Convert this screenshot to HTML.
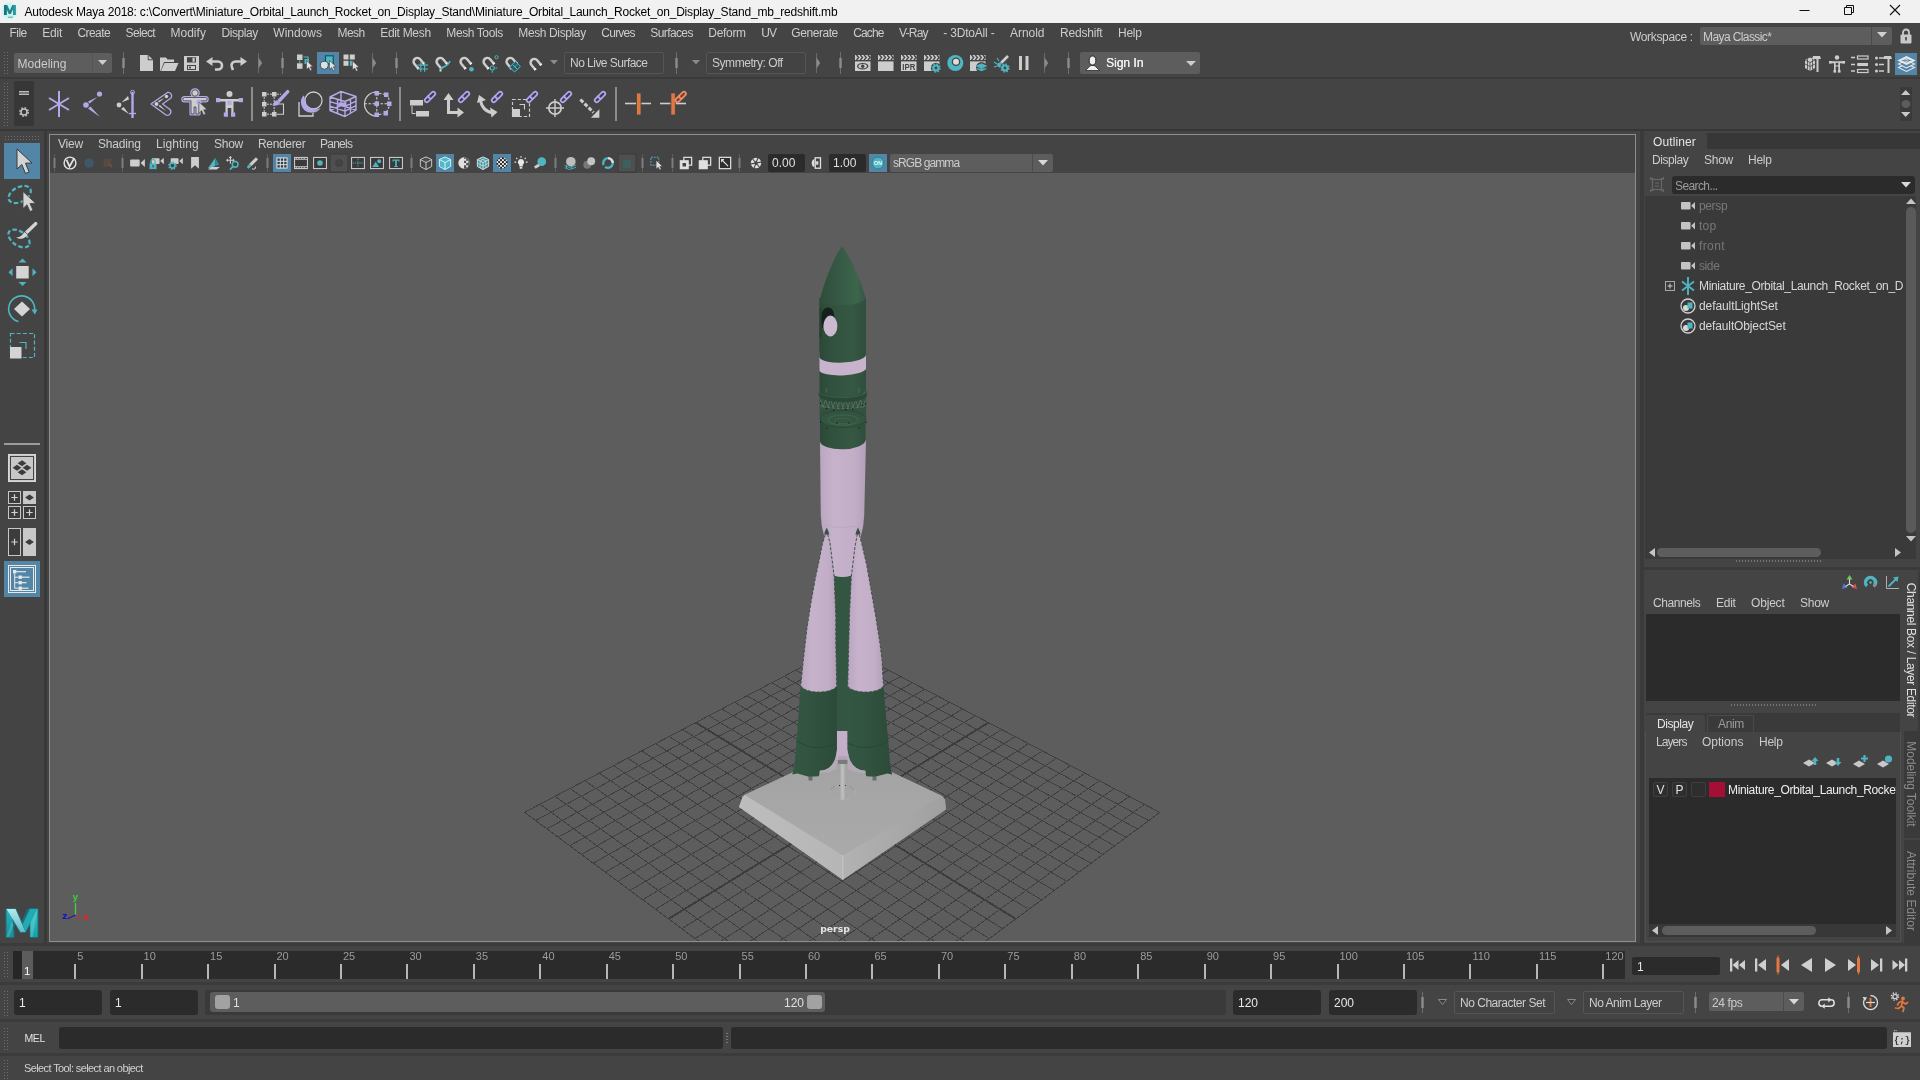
<!DOCTYPE html>
<html><head><meta charset="utf-8"><title>Autodesk Maya 2018</title>
<style>
*{box-sizing:border-box;margin:0;padding:0}
html,body{width:1920px;height:1080px;overflow:hidden;background:#444444;}
body{position:relative;font-family:"Liberation Sans","DejaVu Sans",sans-serif;font-size:12px;color:#cccccc;}
.a{position:absolute;}
.t{position:absolute;white-space:nowrap;line-height:14px;height:14px;}
.fld{position:absolute;background:#2b2b2b;border-radius:2px;}
svg{position:absolute;overflow:visible;}
</style></head><body><div class="a" style="left:0;top:0;width:1920px;height:1080px;will-change:transform">
<div class="a" style="left:0;top:0;width:1920px;height:23px;background:#f1f1f1"></div>
<svg style="left:2px;top:2px" width="16" height="18" viewBox="0 0 16 18">
<defs><radialGradient id="tig" cx=".5" cy=".5" r=".6"><stop offset="0" stop-color="#bdf0f0"/><stop offset=".75" stop-color="#cdf2f2"/><stop offset="1" stop-color="#eef4f4"/></radialGradient></defs>
<rect x="0" y="0.500" width="15" height="16.500" fill="url(#tig)"/>
<path d="M2 3 H5.200 L7.800 8.500 L10.400 3 H13.600 V13 H11 V7.300 L8.800 12 H6.800 L4.600 7.300 V13 H2Z" fill="#1f858b"/>
<path d="M2 3 H4.600 V13 H2Z" fill="#17747b"/><path d="M11 3 H13.600 V13 H11Z" fill="#2a979c"/>
<path d="M6 15.200 h5" stroke="#5aa7ab" stroke-width="1"/>
</svg>
<div class="t" style="left:24.400px;top:5px;font-size:12px;color:#000;line-height:15px;height:15px;letter-spacing:-0.197px">Autodesk Maya 2018: c:\Convert\Miniature_Orbital_Launch_Rocket_on_Display_Stand\Miniature_Orbital_Launch_Rocket_on_Display_Stand_mb_redshift.mb</div>
<svg style="left:1790px;top:-1px" width="130" height="23" viewBox="0 0 130 23">
<path d="M9.5 11.5 H19.5" stroke="#111" stroke-width="1" fill="none"/>
<path d="M54.5 8.5 h7 v7 h-7 z M56.5 8.5 v-2 h7 v7 h-2" stroke="#111" stroke-width="1" fill="none"/>
<path d="M100 6 L110 16 M110 6 L100 16" stroke="#111" stroke-width="1.1" fill="none"/>
</svg>
<div class="t mm" style="left:9.4px;top:26px;letter-spacing:-0.486px">File</div><div class="t mm" style="left:42.3px;top:26px;letter-spacing:-0.247px">Edit</div><div class="t mm" style="left:77.5px;top:26px;letter-spacing:-0.572px">Create</div><div class="t mm" style="left:125.6px;top:26px;letter-spacing:-0.677px">Select</div><div class="t mm" style="left:170.4px;top:26px;letter-spacing:0.043px">Modify</div><div class="t mm" style="left:221.5px;top:26px;letter-spacing:-0.437px">Display</div><div class="t mm" style="left:273.3px;top:26px;letter-spacing:0.002px">Windows</div><div class="t mm" style="left:337.5px;top:26px;letter-spacing:-0.536px">Mesh</div><div class="t mm" style="left:380.2px;top:26px;letter-spacing:-0.307px">Edit Mesh</div><div class="t mm" style="left:446.3px;top:26px;letter-spacing:-0.398px">Mesh Tools</div><div class="t mm" style="left:518.3px;top:26px;letter-spacing:-0.378px">Mesh Display</div><div class="t mm" style="left:601.3px;top:26px;letter-spacing:-0.753px">Curves</div><div class="t mm" style="left:650.3px;top:26px;letter-spacing:-0.607px">Surfaces</div><div class="t mm" style="left:708.3px;top:26px;letter-spacing:-0.307px">Deform</div><div class="t mm" style="left:761.3px;top:26px;letter-spacing:-1.086px">UV</div><div class="t mm" style="left:791.3px;top:26px;letter-spacing:-0.443px">Generate</div><div class="t mm" style="left:853.3px;top:26px;letter-spacing:-0.897px">Cache</div><div class="t mm" style="left:899.0px;top:26px;letter-spacing:-0.778px">V-Ray</div><div class="t mm" style="left:943.3px;top:26px;letter-spacing:-0.195px">- 3DtoAll -</div><div class="t mm" style="left:1010.0px;top:26px;letter-spacing:-0.031px">Arnold</div><div class="t mm" style="left:1060.0px;top:26px;letter-spacing:-0.191px">Redshift</div><div class="t mm" style="left:1118.0px;top:26px;letter-spacing:-0.247px">Help</div>
<div class="t" style="left:1630px;top:30px;letter-spacing:-0.343px">Workspace :</div><div class="a" style="left:1700px;top:27px;width:192px;height:18px;background:#5d5d5d;border-radius:2px"></div><div class="a" style="left:1871px;top:27px;width:1px;height:18px;background:#4a4a4a"></div><div class="t" style="left:1703px;top:30px;letter-spacing:-0.595px">Maya Classic*</div><svg style="left:1877px;top:32px" width="10" height="6"><path d="M0 0 H10 L5 5.5Z" fill="#d0d0d0"/></svg><svg style="left:1900px;top:28px" width="12" height="16" viewBox="0 0 12 16">
<path d="M3 7 V4.5 a3 3 0 0 1 6 0 V7" stroke="#c8c8c8" stroke-width="1.8" fill="none"/>
<rect x="0.5" y="6.5" width="11" height="9" rx="1" fill="#c8c8c8"/><rect x="5.2" y="9" width="1.6" height="3.5" fill="#444"/>
</svg>
<div class="a" style="left:3px;top:51px;width:5px;height:25px;background-image:radial-gradient(circle,#6e6e6e 0.6px,transparent 0.9px);background-size:3px 3px"></div>
<div class="a" style="left:14px;top:53px;width:98px;height:20px;background:#5d5d5d;border-radius:2px"></div><div class="a" style="left:92px;top:53px;width:1px;height:20px;background:#555"></div><div class="t" style="left:17.500px;top:57px;letter-spacing:0.037px">Modeling</div><svg style="left:98px;top:60px" width="9" height="5" viewBox="0 0 9 5"><path d="M0 0 H9 L4.5 5Z" fill="#cdcdcd"/></svg>
<svg style="left:121px;top:52px" width="5" height="22" viewBox="0 0 5 22"><path d="M2.500 0 V22" stroke="#6e6e6e" stroke-width="1"/><rect x="1.300" y="6" width="2.400" height="10" fill="#8c8c8c"/></svg>
<svg style="left:139.5px;top:55px" width="13" height="16" viewBox="0 0 13 16"><path d="M0 0 H8 L13 5 V16 H0Z" fill="#cdcdcd"/><path d="M8 0 V5 H13" fill="#444" stroke="#444" stroke-width=".5"/><path d="M8.7 0.7 L12.3 4.3 H8.7Z" fill="#cdcdcd"/></svg>
<svg style="left:160px;top:56px" width="19" height="15" viewBox="0 0 19 15"><path d="M0 15 V1.5 H6 L7.5 3.5 H14 V6 H4 L1 14Z" fill="#cdcdcd"/><path d="M4.5 7 H18.5 L15 15 H1Z" fill="#cdcdcd"/></svg>
<svg style="left:184px;top:56px" width="15" height="15" viewBox="0 0 15 15"><path d="M0 0 H15 V15 H0Z" fill="#cdcdcd"/><rect x="3" y="1.2" width="9" height="5.3" fill="#444"/><rect x="8.5" y="1.8" width="2.2" height="4" fill="#cdcdcd"/><rect x="3" y="9" width="9" height="5" fill="#444"/><rect x="4" y="10" width="7" height="3" fill="#cdcdcd"/><rect x="5" y="10.7" width="2" height="1.6" fill="#444"/></svg>
<svg style="left:206px;top:57px" width="18" height="14" viewBox="0 0 18 14"><path d="M5 4.5 H12 A4 4 0 0 1 12 12.5 H9" stroke="#cdcdcd" stroke-width="2.6" fill="none"/><path d="M0 4.5 L6.5 0 V9Z" fill="#cdcdcd"/></svg>
<svg style="left:229px;top:57px" width="18" height="14" viewBox="0 0 18 14"><path d="M13 4.5 H6.5 A4 4 0 0 0 3 10.5 L4 13" stroke="#cdcdcd" stroke-width="2.6" fill="none"/><path d="M18 4.5 L11.5 0 V9Z" fill="#cdcdcd"/></svg>
<svg style="left:257px;top:53px" width="6" height="20" viewBox="0 0 6 20"><path d="M1.500 0 V20" stroke="#6a6a6a" stroke-width="1"/><path d="M1.500 4.500 L5.200 10 L1.500 15.500Z" fill="#8c8c8c"/></svg>
<svg style="left:280px;top:52px" width="5" height="22" viewBox="0 0 5 22"><path d="M2.500 0 V22" stroke="#6e6e6e" stroke-width="1"/><rect x="1.300" y="6" width="2.400" height="10" fill="#8c8c8c"/></svg>
<svg style="left:296px;top:54px" width="18" height="18" viewBox="0 0 18 18"><rect x="1" y="0.500" width="5.500" height="5.500" fill="#cdcdcd"/><rect x="1" y="9.300" width="5.500" height="5.500" fill="#cdcdcd"/><path d="M3.700 6.500 v2.500 M7.500 3 H12 V6" stroke="#4fb5c0" stroke-width="1.200" fill="none"/><rect x="8.500" y="5" width="4.500" height="5" fill="#4fb5c0"/><g transform="translate(10.5,6.5)"><path d="M0 0 L0 9 L2.2 7 L3.8 10.3 L5.4 9.6 L3.8 6.3 L6.6 6.2Z" fill="#e0e0e0" stroke="#444" stroke-width=".6"/></g></svg>
<div class="a" style="left:317px;top:52px;width:22px;height:22px;background:#5285a6"></div><svg style="left:319px;top:54px" width="18" height="18" viewBox="0 0 18 18"><rect x="6.500" y="1.800" width="7.800" height="8" fill="#4fb5c0" stroke="#0e4f5c" stroke-width="1.100"/><circle cx="5.300" cy="11.300" r="4" fill="#e0e0e0" stroke="#1f4d68" stroke-width=".9"/><g transform="translate(10.5,6.5)"><path d="M0 0 L0 9 L2.2 7 L3.8 10.3 L5.4 9.6 L3.8 6.3 L6.6 6.2Z" fill="#e0e0e0" stroke="#444" stroke-width=".6"/></g></svg>
<svg style="left:343px;top:54px" width="18" height="18" viewBox="0 0 18 18"><rect x="0.500" y="0.500" width="5" height="5" fill="#cdcdcd"/><rect x="6.800" y="0.500" width="5" height="5" fill="#cdcdcd"/><rect x="0.500" y="6.800" width="5" height="5" fill="#cdcdcd"/><rect x="6.800" y="6.800" width="3.500" height="5" fill="#4fb5c0"/><g transform="translate(9.5,7)"><path d="M0 0 L0 9 L2.2 7 L3.8 10.3 L5.4 9.6 L3.8 6.3 L6.6 6.2Z" fill="#e0e0e0" stroke="#444" stroke-width=".6"/></g></svg>
<svg style="left:371px;top:53px" width="6" height="20" viewBox="0 0 6 20"><path d="M1.500 0 V20" stroke="#6a6a6a" stroke-width="1"/><path d="M1.500 4.500 L5.200 10 L1.500 15.500Z" fill="#8c8c8c"/></svg>
<svg style="left:394px;top:52px" width="5" height="22" viewBox="0 0 5 22"><path d="M2.500 0 V22" stroke="#6e6e6e" stroke-width="1"/><rect x="1.300" y="6" width="2.400" height="10" fill="#8c8c8c"/></svg>
<svg style="left:410px;top:54px" width="17" height="18" viewBox="0 0 17 18"><g transform="translate(7.3,7.6) rotate(-40)"><path d="M-3.700 6.200 V0 A3.700 3.700 0 0 1 3.700 0 V6.200" stroke="#cdcdcd" stroke-width="2.500" fill="none"/><rect x="-4.950" y="5" width="2.500" height="1.600" fill="#f4f4f4"/><rect x="2.450" y="5" width="2.500" height="1.600" fill="#f4f4f4"/></g><path d="M10.800 8.500 V17.800 M14.600 8.500 V17.800 M7.500 11.200 H18 M7.500 15 H18" stroke="#4fb5c0" stroke-width="1.200"/></svg>
<svg style="left:433px;top:54px" width="17" height="18" viewBox="0 0 17 18"><g transform="translate(7.3,7.6) rotate(-40)"><path d="M-3.700 6.200 V0 A3.700 3.700 0 0 1 3.700 0 V6.200" stroke="#cdcdcd" stroke-width="2.500" fill="none"/><rect x="-4.950" y="5" width="2.500" height="1.600" fill="#f4f4f4"/><rect x="2.450" y="5" width="2.500" height="1.600" fill="#f4f4f4"/></g><path d="M7.500 16 C8 11.500 14 14.500 17 7" stroke="#4fb5c0" stroke-width="1.800" fill="none"/><rect x="6.500" y="15.500" width="2" height="2" fill="#ddd"/></svg>
<svg style="left:457px;top:54px" width="17" height="18" viewBox="0 0 17 18"><g transform="translate(7.3,7.6) rotate(-40)"><path d="M-3.700 6.200 V0 A3.700 3.700 0 0 1 3.700 0 V6.200" stroke="#cdcdcd" stroke-width="2.500" fill="none"/><rect x="-4.950" y="5" width="2.500" height="1.600" fill="#f4f4f4"/><rect x="2.450" y="5" width="2.500" height="1.600" fill="#f4f4f4"/></g><circle cx="14.500" cy="15.200" r="2.300" fill="#4fb5c0"/></svg>
<svg style="left:480px;top:54px" width="17" height="18" viewBox="0 0 17 18"><g transform="translate(7.3,7.6) rotate(-40)"><path d="M-3.700 6.200 V0 A3.700 3.700 0 0 1 3.700 0 V6.200" stroke="#cdcdcd" stroke-width="2.500" fill="none"/><rect x="-4.950" y="5" width="2.500" height="1.600" fill="#f4f4f4"/><rect x="2.450" y="5" width="2.500" height="1.600" fill="#f4f4f4"/></g><circle cx="12.300" cy="14" r="2" fill="none" stroke="#4fb5c0" stroke-width="1.100"/><circle cx="16.500" cy="3.200" r="1.600" fill="none" stroke="#4fb5c0" stroke-width="1"/><path d="M12.300 16.800 v2 M15.300 14 h2" stroke="#4fb5c0" stroke-width="1"/></svg>
<svg style="left:503px;top:54px" width="17" height="18" viewBox="0 0 17 18"><g transform="translate(7.3,7.6) rotate(-40)"><path d="M-3.700 6.200 V0 A3.700 3.700 0 0 1 3.700 0 V6.200" stroke="#cdcdcd" stroke-width="2.500" fill="none"/><rect x="-4.950" y="5" width="2.500" height="1.600" fill="#f4f4f4"/><rect x="2.450" y="5" width="2.500" height="1.600" fill="#f4f4f4"/></g><path d="M6.500 13 L12.500 7.500 L17.500 12.500 L11.500 18Z" fill="#2d5a62" stroke="#4fb5c0" stroke-width="1"/><path d="M9.500 10.500 L14.500 15.500 M11 13.500 l3 -3" stroke="#4fb5c0" stroke-width="1" fill="none"/></svg>
<svg style="left:527px;top:55px" width="17" height="18" viewBox="0 0 17 18"><g transform="translate(7.3,7.6) rotate(-40)"><path d="M-3.700 6.200 V0 A3.700 3.700 0 0 1 3.700 0 V6.200" stroke="#cdcdcd" stroke-width="2.500" fill="none"/><rect x="-4.950" y="5" width="2.500" height="1.600" fill="#f4f4f4"/><rect x="2.450" y="5" width="2.500" height="1.600" fill="#f4f4f4"/></g></svg>
<svg style="left:550px;top:60px" width="8" height="5" viewBox="0 0 8 5"><path d="M0 0 H8 L4 4.5Z" fill="#8a8a8a"/></svg>
<div class="a" style="left:564px;top:52px;width:100px;height:22px;border:1px solid #555;border-radius:2px;background:#434343"></div><div class="t" style="left:570px;top:56px;letter-spacing:-0.526px">No Live Surface</div><svg style="left:674px;top:52px" width="5" height="22" viewBox="0 0 5 22"><path d="M2.500 0 V22" stroke="#6e6e6e" stroke-width="1"/><rect x="1.300" y="6" width="2.400" height="10" fill="#8c8c8c"/></svg>
<svg style="left:692px;top:60px" width="8" height="5" viewBox="0 0 8 5"><path d="M0 0 H8 L4 4.5Z" fill="#8a8a8a"/></svg>
<div class="a" style="left:706px;top:52px;width:100px;height:22px;border:1px solid #555;border-radius:2px;background:#434343"></div><div class="t" style="left:712px;top:56px;letter-spacing:-0.443px">Symmetry: Off</div><svg style="left:815px;top:53px" width="6" height="20" viewBox="0 0 6 20"><path d="M1.500 0 V20" stroke="#6a6a6a" stroke-width="1"/><path d="M1.500 4.500 L5.200 10 L1.500 15.500Z" fill="#8c8c8c"/></svg>
<svg style="left:838px;top:52px" width="5" height="22" viewBox="0 0 5 22"><path d="M2.500 0 V22" stroke="#6e6e6e" stroke-width="1"/><rect x="1.300" y="6" width="2.400" height="10" fill="#8c8c8c"/></svg>
<svg style="left:855px;top:55px" width="16" height="16" viewBox="0 0 16 16"><rect x="0" y="0" width="15.500" height="5" fill="#cdcdcd"/><path d="M1.500 0 l2.200 2.500 l-2.200 2.500 M5.300 0 l2.200 2.500 l-2.200 2.500 M9.100 0 l2.200 2.500 l-2.200 2.500 M12.900 0 l2.200 2.500 l-2.200 2.500" stroke="#444" stroke-width="1.300" fill="none"/><rect x="0" y="2.100" width="15.500" height=".8" fill="#444" opacity=".0"/><rect x="0" y="6.400" width="15.500" height="9.600" fill="#cdcdcd"/><ellipse cx="7.700" cy="11.200" rx="5.600" ry="3.300" fill="#444"/><ellipse cx="7.700" cy="11.200" rx="4.200" ry="2.100" fill="#cdcdcd"/><circle cx="7.700" cy="11.200" r="1.700" fill="#444"/></svg>
<svg style="left:878px;top:55px" width="16" height="16" viewBox="0 0 16 16"><rect x="0" y="0" width="15.500" height="5" fill="#cdcdcd"/><path d="M1.500 0 l2.200 2.500 l-2.200 2.500 M5.300 0 l2.200 2.500 l-2.200 2.500 M9.100 0 l2.200 2.500 l-2.200 2.500 M12.900 0 l2.200 2.500 l-2.200 2.500" stroke="#444" stroke-width="1.300" fill="none"/><rect x="0" y="2.100" width="15.500" height=".8" fill="#444" opacity=".0"/><rect x="0" y="6.400" width="15.500" height="9.600" fill="#cdcdcd"/></svg>
<svg style="left:901px;top:55px" width="16" height="16" viewBox="0 0 16 16"><rect x="0" y="0" width="15.500" height="5" fill="#cdcdcd"/><path d="M1.500 0 l2.200 2.500 l-2.200 2.500 M5.300 0 l2.200 2.500 l-2.200 2.500 M9.100 0 l2.200 2.500 l-2.200 2.500 M12.900 0 l2.200 2.500 l-2.200 2.500" stroke="#444" stroke-width="1.300" fill="none"/><rect x="0" y="2.100" width="15.500" height=".8" fill="#444" opacity=".0"/><rect x="0" y="6.400" width="15.500" height="9.600" fill="#cdcdcd"/><text x="7.800" y="14.600" font-size="8.500" font-weight="bold" text-anchor="middle" fill="#444" font-family="Liberation Sans,sans-serif" textLength="13" lengthAdjust="spacingAndGlyphs">IPR</text></svg>
<svg style="left:924px;top:55px" width="17" height="17" viewBox="0 0 17 17"><rect x="0" y="0" width="15.500" height="5" fill="#cdcdcd"/><path d="M1.500 0 l2.200 2.500 l-2.200 2.500 M5.300 0 l2.200 2.500 l-2.200 2.500 M9.100 0 l2.200 2.500 l-2.200 2.500 M12.900 0 l2.200 2.500 l-2.200 2.500" stroke="#444" stroke-width="1.300" fill="none"/><rect x="0" y="2.100" width="15.500" height=".8" fill="#444" opacity=".0"/><rect x="0" y="6.400" width="15.500" height="9.600" fill="#cdcdcd"/><circle cx="12" cy="13" r="5.2" fill="#444"/><circle cx="12" cy="13" r="3.6" fill="#4fb5c0"/><circle cx="12" cy="13" r="3.9" fill="none" stroke="#4fb5c0" stroke-width="1.6" stroke-dasharray="1.5 1.56"/><circle cx="12" cy="13" r="1.4" fill="#444"/></svg>
<svg style="left:947px;top:55px" width="17" height="17" viewBox="0 0 17 17"><circle cx="8.3" cy="8" r="8" fill="#4fb5c0"/><circle cx="9" cy="6.8" r="4.3" fill="#444"/><circle cx="9" cy="6.8" r="3" fill="#ddd"/></svg>
<svg style="left:970px;top:55px" width="17" height="17" viewBox="0 0 17 17"><rect x="0" y="0" width="15.500" height="5" fill="#cdcdcd"/><path d="M1.500 0 l2.200 2.500 l-2.200 2.500 M5.300 0 l2.200 2.500 l-2.200 2.500 M9.100 0 l2.200 2.500 l-2.200 2.500 M12.900 0 l2.200 2.500 l-2.200 2.500" stroke="#444" stroke-width="1.300" fill="none"/><rect x="0" y="2.100" width="15.500" height=".8" fill="#444" opacity=".0"/><rect x="0" y="6.400" width="15.500" height="9.600" fill="#cdcdcd"/><circle cx="11.5" cy="12.5" r="5.5" fill="#444"/><path d="M6.5 11 L11.5 8.8 L16.5 11 L11.5 13.2Z M6.5 13.5 L11.5 15.7 L16.5 13.5" fill="#4fb5c0" stroke="#4fb5c0" stroke-width="1"/></svg>
<svg style="left:993px;top:55px" width="17" height="17" viewBox="0 0 17 17"><path d="M8 8 L15 1" stroke="#cdcdcd" stroke-width="2.6"/><path d="M1 7 l3 2 M4 3 l2 3 M1 12 l3 -1" stroke="#4fb5c0" stroke-width="1.1"/><circle cx="6.5" cy="10" r="2.4" fill="#4fb5c0"/><circle cx="12" cy="13" r="5" fill="#444"/><circle cx="12" cy="13" r="3.6" fill="#4fb5c0"/><circle cx="12" cy="13" r="3.9" fill="none" stroke="#4fb5c0" stroke-width="1.6" stroke-dasharray="1.5 1.56"/><circle cx="12" cy="13" r="1.4" fill="#444"/></svg>
<svg style="left:1019px;top:56px" width="10" height="14" viewBox="0 0 10 14"><rect x="0" y="0" width="3" height="14" fill="#cdcdcd"/><rect x="6.5" y="0" width="3" height="14" fill="#cdcdcd"/></svg>
<svg style="left:1043px;top:53px" width="6" height="20" viewBox="0 0 6 20"><path d="M1.500 0 V20" stroke="#6a6a6a" stroke-width="1"/><path d="M1.500 4.500 L5.200 10 L1.500 15.500Z" fill="#8c8c8c"/></svg>
<svg style="left:1066px;top:52px" width="5" height="22" viewBox="0 0 5 22"><path d="M2.500 0 V22" stroke="#6e6e6e" stroke-width="1"/><rect x="1.300" y="6" width="2.400" height="10" fill="#8c8c8c"/></svg>
<div class="a" style="left:1080px;top:52px;width:120px;height:22px;background:#5d5d5d;border-radius:2px"></div><svg style="left:1085px;top:55px" width="15" height="16" viewBox="0 0 15 16"><path d="M0.500 15.500 L4.500 11.500 L6 10.500 H9 L10.500 11.500 L14.500 15.500Z" fill="#f0f0f0" stroke="#1e1e1e" stroke-width=".7"/><ellipse cx="7.500" cy="5.500" rx="3.300" ry="4.500" fill="#f0f0f0" stroke="#1e1e1e" stroke-width=".9"/></svg>
<div class="t" style="left:1106px;top:56px;font-size:12px;color:#eee;text-shadow:0.3px 0 0 #eee;letter-spacing:-0.008px">Sign In</div><svg style="left:1186px;top:61px" width="10" height="5" viewBox="0 0 10 5"><path d="M0 0 H10 L5 5Z" fill="#cdcdcd"/></svg>
<svg style="left:1804px;top:55px" width="18" height="18" viewBox="0 0 18 18"><path d="M1 5 L6 2.5 L11 5 V13 L6 16 L1 13Z" fill="#cdcdcd"/><path d="M1 5 L6 7.5 L11 5 M6 7.5 V16 M3.5 3.8 V14.5 M8.5 3.8 V14.5 M1 9 L6 11.5 L11 9" stroke="#444" stroke-width=".8" fill="none"/><path d="M9 1 H16 L17 4 H14.5 V17 H12.5 V4 H8Z" fill="#cdcdcd"/></svg>
<svg style="left:1829px;top:55px" width="16" height="18" viewBox="0 0 16 18"><circle cx="8" cy="2.500" r="2.200" fill="#cdcdcd"/><path d="M2 6.300 H14 V8.300 H11 V15 H9.300 V11.500 H6.700 V15 H5 V8.300 H2Z" fill="#cdcdcd"/><rect x="0" y="6" width="2.600" height="2.600" fill="#cdcdcd"/><rect x="13.400" y="6" width="2.600" height="2.600" fill="#cdcdcd"/><rect x="4.500" y="15" width="2.600" height="2.600" fill="#cdcdcd"/><rect x="8.900" y="15" width="2.600" height="2.600" fill="#cdcdcd"/><rect x="6.700" y="7.800" width="2.600" height="2.600" fill="#444"/></svg>
<svg style="left:1851px;top:56px" width="18" height="17" viewBox="0 0 18 17"><path d="M0 1.5 h4 M0 8.5 h4 M0 15 h4" stroke="#cdcdcd" stroke-width="1.3"/><rect x="6.5" y="0" width="10.5" height="3" fill="none" stroke="#cdcdcd" stroke-width="1.2"/><rect x="6.5" y="13.5" width="10.5" height="3" fill="none" stroke="#cdcdcd" stroke-width="1.2"/><rect x="6.5" y="7" width="10.5" height="3" fill="#cdcdcd"/><circle cx="8" cy="8.5" r="1.8" fill="#cdcdcd"/><circle cx="15" cy="8.5" r="1.8" fill="#cdcdcd"/></svg>
<svg style="left:1875px;top:56px" width="18" height="17" viewBox="0 0 18 17"><circle cx="1.5" cy="2" r="1.5" fill="#cdcdcd"/><circle cx="1.5" cy="8.5" r="1.5" fill="#cdcdcd"/><circle cx="1.5" cy="15" r="1.5" fill="#cdcdcd"/><path d="M4 2 h5 M4 8.5 h5 M4 15 h5" stroke="#cdcdcd" stroke-width="1.3"/><path d="M9 0 H16 L17 3 H14.5 V17 H12.5 V3 H9Z" fill="#cdcdcd"/></svg>
<div class="a" style="left:1895px;top:53px;width:22px;height:22px;background:#5285a6"></div><svg style="left:1898px;top:55px" width="17" height="18" viewBox="0 0 17 18"><path d="M0.5 12.5 L8.5 8.5 L16.5 12.5 L8.5 16.5Z" fill="none" stroke="#e8e8e8" stroke-width="1.1"/><path d="M0.5 9 L8.5 5 L16.5 9 L8.5 13Z" fill="#5285a6" stroke="#e8e8e8" stroke-width="1.1"/><path d="M0.5 5.5 L8.5 1.5 L16.5 5.5 L8.5 9.5Z" fill="#e8e8e8" stroke="#e8e8e8" stroke-width="1.1"/><path d="M5 5.5 L8.5 3.8 L12 5.5 L8.5 7.2Z M3.5 5.5 h10" stroke="#5285a6" stroke-width=".7" fill="none"/></svg>
<div class="a" style="left:0;top:77px;width:1920px;height:2px;background:#3a3a3a"></div>
<div class="a" style="left:3px;top:82px;width:5px;height:44px;background-image:radial-gradient(circle,#6e6e6e 0.6px,transparent 0.9px);background-size:3px 3px"></div>
<div class="a" style="left:14px;top:81px;width:20px;height:45px;background:#373737"></div><svg style="left:19px;top:91px" width="10" height="4" viewBox="0 0 10 4"><path d="M0 .7 H10 M0 3.3 H10" stroke="#bdbdbd" stroke-width="1.4"/></svg>
<svg style="left:19px;top:107px" width="10" height="10" viewBox="0 0 10 10"><circle cx="5" cy="5" r="3" fill="none" stroke="#bdbdbd" stroke-width="1.6"/><circle cx="5" cy="5" r="4.2" fill="none" stroke="#bdbdbd" stroke-width="1.6" stroke-dasharray="1.65 1.65"/></svg>
<svg style="left:46px;top:90px" width="26" height="28" viewBox="0 0 26 28"><path d="M13 1 V27 M3 8 L23 20 M23 8 L3 20" stroke="#b5a8e8" stroke-width="2"/></svg>
<svg style="left:80px;top:90px" width="26" height="28" viewBox="0 0 26 28"><circle cx="19.5" cy="4" r="2.6" fill="#b5a8e8"/><circle cx="6" cy="15" r="2.8" fill="#b5a8e8"/><path d="M17.5 7 L9.5 13.5 L8 11.5Z" fill="#b5a8e8"/><path d="M8 18.5 L10.5 16.5 L20 27Z" fill="#b5a8e8"/></svg>
<svg style="left:114px;top:90px" width="26" height="28" viewBox="0 0 26 28"><circle cx="5" cy="15" r="2.4" fill="#cdcdcd"/><path d="M7.5 12.5 L14 6 L15 9.5Z" fill="#cdcdcd"/><path d="M7 19 L9.5 17 L15 24Z" fill="#cdcdcd"/><path d="M18.5 2 V28" stroke="#b5a8e8" stroke-width="2.4"/><path d="M15 23.5 H22" stroke="#b5a8e8" stroke-width="1.4"/><circle cx="18.5" cy="2.3" r="2" fill="none" stroke="#b5a8e8" stroke-width="1"/></svg>
<svg style="left:148px;top:90px" width="26" height="28" viewBox="0 0 26 28"><path d="M19.5 2.5 L3 14 L18 25 A3.5 3.5 0 0 0 22 19.5 L14.5 14 L23 8 A3.5 3.5 0 0 0 19.5 2.5Z" fill="none" stroke="#b5a8e8" stroke-width="1.3" stroke-linejoin="round"/><circle cx="18.5" cy="6.5" r="1.8" fill="#cdcdcd"/><circle cx="8.5" cy="14" r="2" fill="#cdcdcd"/><path d="M16.5 8 L11 12.5 L10 11Z M10.5 16 L12 15 L18.5 21.5Z" fill="#cdcdcd"/></svg>
<svg style="left:182px;top:89px" width="28" height="30" viewBox="0 0 28 30"><g fill="none" stroke="#b5a8e8" stroke-width="3.2" stroke-linejoin="round"><circle cx="13" cy="4" r="3.2"/><path d="M2.5 8.5 H23.5 A1.6 1.6 0 0 1 23.5 11.8 H17 V25 H14 V18 H12 V25 H9 V11.8 H2.5 A1.6 1.6 0 0 1 2.5 8.5Z"/></g><g fill="#cdcdcd" stroke="#444" stroke-width=".8"><circle cx="13" cy="4" r="3.2"/><path d="M2.5 8.5 H23.5 A1.6 1.6 0 0 1 23.5 11.8 H17 V25 H14 V18 H12 V25 H9 V11.8 H2.5 A1.6 1.6 0 0 1 2.5 8.5Z"/></g><circle cx="17" cy="13" r="2.6" fill="#b5a8e8"/><path d="M17 13 L17 24 L19.6 21.6 L21.6 26 L23.6 25 L21.6 20.8 L25 20.6Z" fill="#cdcdcd" stroke="#444" stroke-width=".5"/></svg>
<svg style="left:216px;top:90px" width="27" height="28" viewBox="0 0 27 28"><circle cx="13.5" cy="4" r="3" fill="#cdcdcd"/><path d="M2 9 H25 V11.5 H17.5 V25 H15.3 V18 H11.7 V25 H9.5 V11.5 H2Z" fill="#cdcdcd"/><rect x="0" y="8" width="4.2" height="4.2" fill="#b5a8e8"/><rect x="22.8" y="8" width="4.2" height="4.2" fill="#b5a8e8"/><rect x="11.4" y="10.8" width="4.2" height="4.2" fill="#b5a8e8"/><rect x="7.8" y="22.5" width="4.2" height="4.2" fill="#b5a8e8"/><rect x="15" y="22.5" width="4.2" height="4.2" fill="#b5a8e8"/></svg>
<div class="a" style="left:251px;top:87px;width:2px;height:34px;background:#8c8c8c"></div>
<svg style="left:262px;top:90px" width="27" height="29" viewBox="0 0 27 29"><rect x="0" y="2" width="4.5" height="4.5" fill="#cdcdcd"/><rect x="10" y="2" width="4.5" height="4.5" fill="#cdcdcd"/><rect x="0" y="12" width="4.5" height="4.5" fill="#cdcdcd"/><rect x="0" y="22" width="4.5" height="4.5" fill="#cdcdcd"/><rect x="10" y="22" width="4.5" height="4.5" fill="#cdcdcd"/><path d="M5 4.200 h5 M15 4.200 h4 M5 24.200 h5 M2.200 7 v5 M2.200 17 v5 M12.200 7 v5 M12.200 17 v5 M5 14.200 h5" stroke="#cdcdcd" stroke-width="1" fill="none" stroke-dasharray="2 1"/><path d="M15 24.200 h6.500 V14 h-6" stroke="#cdcdcd" stroke-width="1.100" fill="none"/><path d="M15 10.500 L24.500 0.500 A1.500 1.500 0 0 1 27 2.800 L17.500 13Z" fill="#b5a8e8"/><path d="M10.500 15.500 C11 12.500 13 10.500 15 10.500 L17.500 13 C17 15 14 16.500 10.500 15.500Z" fill="#b5a8e8"/></svg>
<svg style="left:296px;top:90px" width="28" height="29" viewBox="0 0 28 29"><path d="M3 12 V26 H17 V23" stroke="#cdcdcd" stroke-width="1.3" fill="none"/><circle cx="17.5" cy="10.5" r="8.5" fill="none" stroke="#cdcdcd" stroke-width="1.3"/><path d="M7.5 6 A9.5 9.5 0 0 0 23.5 19 A 8.5 8.5 0 0 1 8.5 9 Z" fill="#b5a8e8"/><path d="M8 5.5 C3 8 4 22 15 22.5 C20 22.5 23 20.5 24.5 18 C19 21.5 9.5 18 9 10.5Z" fill="#b5a8e8"/></svg>
<svg style="left:329px;top:90px" width="28" height="28" viewBox="0 0 28 28"><path d="M1 7 L12 1.500 L27 6.500 V20 L16 26.500 L1 20.500Z M1 7 L16 11.500 L27 6.500 M16 11.500 V26.500 M1 11.700 L16 16.300 L27 11.200 M1 16.200 L16 21.200 L27 15.700 M12 1.500 V15.500 M1 20.500 L12 15.500 L27 20 M8.500 9.300 V23.800 M21.500 9 V23.300" stroke="#b5a8e8" stroke-width="1.400" fill="none" stroke-linejoin="round"/><path d="M9.500 12.500 h8 v3.500 h-8z" fill="#b5a8e8"/></svg>
<svg style="left:363px;top:90px" width="29" height="28" viewBox="0 0 29 28"><path d="M13.5 2 A12 12 0 0 0 13.5 26" stroke="#cdcdcd" stroke-width="1.2" fill="none"/><path d="M1.5 13.8 H26 M13.8 3 V25 M16 3.2 L22 4.5 M25.5 7.5 L26.3 11 M26.3 16.5 L23.5 22 M16 24.8 L20 23.5" stroke="#cdcdcd" stroke-width="1.1" stroke-dasharray="2.5 1.5" fill="none"/><rect x="11.5" y="1" width="4.5" height="4.5" fill="#b5a8e8"/><rect x="21" y="2.5" width="4.5" height="4.5" fill="#b5a8e8"/><rect x="11.5" y="11.5" width="4.5" height="4.5" fill="#b5a8e8"/><rect x="24" y="11.5" width="4.5" height="4.5" fill="#b5a8e8"/><rect x="11.5" y="22.5" width="4.5" height="4.5" fill="#b5a8e8"/><rect x="20.5" y="21" width="4.5" height="4.5" fill="#b5a8e8"/></svg>
<div class="a" style="left:399px;top:87px;width:2px;height:34px;background:#8c8c8c"></div>
<svg style="left:409px;top:90px" width="28" height="28" viewBox="0 0 28 28"><rect x="1" y="10" width="13" height="5.5" fill="#cdcdcd"/><rect x="7" y="21" width="13" height="5.5" fill="#cdcdcd"/><path d="M3 16 V23.5 H6.5" stroke="#cdcdcd" stroke-width="1" fill="none"/><g transform="translate(21,7) rotate(-45)" fill="#3c3766" stroke="#b5a8e8" stroke-width="1.700"><rect x="-6.600" y="-2" width="7.800" height="4" rx="2"/><rect x="-1.200" y="-2" width="7.800" height="4" rx="2"/></g></svg>
<svg style="left:442px;top:90px" width="28" height="28" viewBox="0 0 28 28"><path d="M6.5 8 V22.5 H17" stroke="#cdcdcd" stroke-width="3" fill="none"/><path d="M1.5 10 L6.5 3 L11.5 10Z M15.5 17.5 L22 22.5 L15.5 27.5Z" fill="#cdcdcd"/><g transform="translate(22,7) rotate(-45)" fill="#3c3766" stroke="#b5a8e8" stroke-width="1.700"><rect x="-6.600" y="-2" width="7.800" height="4" rx="2"/><rect x="-1.200" y="-2" width="7.800" height="4" rx="2"/></g></svg>
<svg style="left:475px;top:90px" width="28" height="28" viewBox="0 0 28 28"><path d="M5.5 9.5 C6 17 11 22 17.5 22.5" stroke="#cdcdcd" stroke-width="3" fill="none"/><path d="M2 13 L4 5 L11 10Z M15 17.5 L22.5 22 L16.5 27.5Z" fill="#cdcdcd"/><g transform="translate(22,7) rotate(-45)" fill="#3c3766" stroke="#b5a8e8" stroke-width="1.700"><rect x="-6.600" y="-2" width="7.800" height="4" rx="2"/><rect x="-1.200" y="-2" width="7.800" height="4" rx="2"/></g></svg>
<svg style="left:509px;top:90px" width="28" height="28" viewBox="0 0 28 28"><rect x="3.5" y="9.5" width="17" height="17" fill="none" stroke="#cdcdcd" stroke-width="1.2" stroke-dasharray="3.2 2"/><rect x="3" y="19" width="8" height="8" fill="#cdcdcd"/><path d="M10.5 14.5 H15.5 V19.5" stroke="#cdcdcd" stroke-width="1.1" fill="none"/><g transform="translate(23,7) rotate(-45)" fill="#3c3766" stroke="#b5a8e8" stroke-width="1.700"><rect x="-6.600" y="-2" width="7.800" height="4" rx="2"/><rect x="-1.200" y="-2" width="7.800" height="4" rx="2"/></g></svg>
<svg style="left:543px;top:90px" width="28" height="28" viewBox="0 0 28 28"><circle cx="12" cy="18" r="6.2" fill="none" stroke="#cdcdcd" stroke-width="1.7"/><path d="M12 9 V27 M3 18 H21" stroke="#cdcdcd" stroke-width="1.4"/><g transform="translate(23,7) rotate(-45)" fill="#3c3766" stroke="#b5a8e8" stroke-width="1.700"><rect x="-6.600" y="-2" width="7.800" height="4" rx="2"/><rect x="-1.200" y="-2" width="7.800" height="4" rx="2"/></g></svg>
<svg style="left:577px;top:90px" width="28" height="28" viewBox="0 0 28 28"><path d="M3.400 9.500 L16.500 22.500" stroke="#cdcdcd" stroke-width="3" stroke-dasharray="4 1.800"/><path d="M22.400 19.200 V27.700 H13.900Z" fill="#cdcdcd"/><g transform="translate(23,7) rotate(-45)" fill="#3c3766" stroke="#b5a8e8" stroke-width="1.700"><rect x="-6.600" y="-2" width="7.800" height="4" rx="2"/><rect x="-1.200" y="-2" width="7.800" height="4" rx="2"/></g></svg>
<div class="a" style="left:615px;top:87px;width:2px;height:34px;background:#8c8c8c"></div>
<svg style="left:625px;top:90px" width="27" height="28" viewBox="0 0 27 28"><path d="M0 13.5 H26" stroke="#cdcdcd" stroke-width="1.6"/><rect x="11.600" y="3" width="4.400" height="22" fill="#e07840" stroke="#444" stroke-width=".8"/></svg>
<svg style="left:660px;top:90px" width="29" height="28" viewBox="0 0 29 28"><path d="M0 13.5 H26" stroke="#cdcdcd" stroke-width="1.6"/><rect x="10.900" y="3" width="4.400" height="22" fill="#e07840" stroke="#444" stroke-width=".8"/><g transform="translate(20.7,7) rotate(-45)" fill="#8a3d20" stroke="#e89070" stroke-width="1.700"><rect x="-6.600" y="-2" width="7.800" height="4" rx="2"/><rect x="-1.200" y="-2" width="7.800" height="4" rx="2"/></g></svg>
<div class="a" style="left:1900px;top:87px;width:12px;height:34px;background:#3a3a3a"></div><svg style="left:1901px;top:89px" width="10" height="6" viewBox="0 0 10 6"><path d="M0 6 L4.700 1 L9.400 6Z" fill="#c8c8c8"/></svg>
<svg style="left:1901px;top:100px" width="9" height="8" viewBox="0 0 9 8"><ellipse cx="4.900" cy="4" rx="4.500" ry="4" fill="#5c5c5c"/></svg>
<svg style="left:1901px;top:111px" width="10" height="6" viewBox="0 0 10 6"><path d="M0 1 L4.700 6 L9.400 1Z" fill="#c8c8c8"/></svg>
<div class="a" style="left:0;top:129px;width:1920px;height:2px;background:#373737"></div>
<div class="a" style="left:44px;top:131px;width:2.500px;height:813px;background:#393939"></div><div class="a" style="left:4px;top:135px;width:37px;height:5px;background-image:radial-gradient(circle,#6e6e6e 0.6px,transparent 0.9px);background-size:3px 3px"></div>
<div class="a" style="left:4px;top:143px;width:36px;height:36px;background:#5285a6"></div><svg style="left:16px;top:148px" width="18" height="28" viewBox="0 0 18 28"><path d="M1 1 L1 21 L5.8 16.5 L9.5 25.5 L13.2 24 L9.5 15.2 L16 15Z" fill="#d4d4d4" stroke="#3a3a3a" stroke-width="1"/></svg>
<svg style="left:8px;top:183px" width="30" height="30" viewBox="0 0 30 30"><ellipse cx="11.700" cy="11.500" rx="12" ry="7.300" transform="rotate(-28 11.700 11.500)" fill="none" stroke="#4fb5c0" stroke-width="2.200" stroke-dasharray="4.500 2.300"/><path d="M15 8.5 L15 25.5 L19 21.7 L22 28.5 L25 27.2 L22 20.5 L27.5 20.2Z" fill="#d4d4d4" stroke="#444" stroke-width=".8"/></svg>
<svg style="left:7px;top:220px" width="31" height="31" viewBox="0 0 31 31"><ellipse cx="12" cy="18.500" rx="12" ry="7" transform="rotate(35 12 18.500)" fill="none" stroke="#4fb5c0" stroke-width="2.200" stroke-dasharray="4.500 2.300"/><path d="M18 11.5 L27.5 2.5 A1.6 1.6 0 0 1 30 4.8 L20.5 14Z" fill="#d4d4d4"/><path d="M9 17.5 C14 17.5 16 14 17.5 12 L20.5 14.5 C19 18 14 20.5 9 17.5Z" fill="#d4d4d4"/></svg>
<svg style="left:8px;top:258px" width="29" height="28" viewBox="0 0 29 28"><rect x="8.2" y="8" width="12.5" height="12.5" fill="#d4d4d4"/><path d="M10.5 4.5 L14.5 0.5 L18.5 4.5Z M10.5 24 L14.5 28 L18.5 24Z M4.5 10.2 L0.5 14.2 L4.5 18.2Z M24.5 10.2 L28.5 14.2 L24.5 18.2Z" fill="#4fb5c0"/></svg>
<svg style="left:7px;top:294px" width="31" height="30" viewBox="0 0 31 30"><path d="M11.5 27.5 A13 13 0 1 1 27.5 17" fill="none" stroke="#4fb5c0" stroke-width="1.6"/><path d="M24.5 15.5 L30.5 15.5 L27.8 20.5Z" fill="#4fb5c0"/><path d="M15 7.5 L23 15 L15 22.5 L7 15Z" fill="#d4d4d4"/></svg>
<svg style="left:9px;top:332px" width="27" height="27" viewBox="0 0 27 27"><rect x="1.5" y="1.5" width="24" height="24" fill="none" stroke="#4fb5c0" stroke-width="1.2" stroke-dasharray="4 2.2"/><rect x="1" y="15" width="11.5" height="11.5" fill="#d4d4d4"/><path d="M10.500 10.500 H17 V17" stroke="#4fb5c0" stroke-width="1.2" fill="none"/></svg>
<div class="a" style="left:4px;top:443px;width:36px;height:2px;background:#9c9c9c"></div>
<svg style="left:8px;top:454px" width="28" height="28" viewBox="0 0 28 28"><rect x="0.500" y="0.500" width="27" height="27" fill="#c8c8c8" stroke="#d8d8d8" stroke-width="1"/><rect x="2.500" y="2.500" width="23" height="23" fill="none" stroke="#444" stroke-width="1"/><path d="M9.6 9.3 l4.400 -3 l4.400 3 l-4.400 3z" fill="#3c3c3c"/><path d="M9.6 18.3 l4.400 -3 l4.400 3 l-4.400 3z" fill="#3c3c3c"/><path d="M4.6 13.8 l4.400 -3 l4.400 3 l-4.400 3z" fill="#3c3c3c"/><path d="M14.6 13.8 l4.400 -3 l4.400 3 l-4.400 3z" fill="#3c3c3c"/></svg>
<svg style="left:8px;top:491px" width="28" height="28" viewBox="0 0 28 28"><rect x="0.5" y="0.5" width="12" height="12" fill="#3c3c3c" stroke="#c8c8c8" stroke-width="1"/><path d="M3.3 6.5 h6.400 M6.5 3.3 v6.400" stroke="#d0d0d0" stroke-width="1.200"/><rect x="15" y="0" width="13" height="13" fill="#c8c8c8"/><path d="M17.1 6.5 l4.400 -3 l4.400 3 l-4.400 3z" fill="#3c3c3c"/><rect x="0.5" y="15.5" width="12" height="12" fill="#3c3c3c" stroke="#c8c8c8" stroke-width="1"/><path d="M3.3 21.5 h6.400 M6.5 18.3 v6.400" stroke="#d0d0d0" stroke-width="1.200"/><rect x="15.5" y="15.5" width="12" height="12" fill="#3c3c3c" stroke="#c8c8c8" stroke-width="1"/><path d="M18.3 21.5 h6.400 M21.5 18.3 v6.400" stroke="#d0d0d0" stroke-width="1.200"/></svg>
<svg style="left:8px;top:528px" width="28" height="28" viewBox="0 0 28 28"><rect x="0.5" y="0.5" width="12" height="27" fill="#3c3c3c" stroke="#c8c8c8" stroke-width="1"/><path d="M3.3 14 h6.400 M6.5 10.8 v6.400" stroke="#d0d0d0" stroke-width="1.200"/><rect x="15" y="0" width="13" height="28" fill="#c8c8c8"/><path d="M17.1 14 l4.400 -3 l4.400 3 l-4.400 3z" fill="#3c3c3c"/></svg>
<div class="a" style="left:4px;top:561px;width:36px;height:36px;background:#5285a6"></div><svg style="left:8px;top:565px" width="28" height="28" viewBox="0 0 28 28"><rect x="0.5" y="0.5" width="27" height="27" fill="none" stroke="#e8e8e8" stroke-width="1"/><rect x="2.5" y="2.5" width="23" height="23" fill="none" stroke="#e8e8e8" stroke-width="1"/><path d="M6.7 8.4 V23.2 H10.5 M6.7 12.2 H10.5 M6.7 17.700 H10.5" stroke="#e8e8e8" stroke-width="1" fill="none"/><rect x="5" y="5" width="3.4" height="3.4" fill="#e8e8e8"/><path d="M8.4 6.7 h9.6" stroke="#e8e8e8" stroke-width="1.2"/><rect x="10.5" y="10.5" width="3.4" height="3.4" fill="#e8e8e8"/><path d="M13.9 12.2 h7.6" stroke="#e8e8e8" stroke-width="1.2"/><rect x="10.5" y="16" width="3.4" height="3.4" fill="#e8e8e8"/><path d="M13.9 17.7 h4.6" stroke="#e8e8e8" stroke-width="1.2"/><rect x="10.5" y="21.5" width="3.4" height="3.4" fill="#e8e8e8"/><path d="M13.9 23.2 h6.6" stroke="#e8e8e8" stroke-width="1.2"/></svg>
<svg style="left:5px;top:907px" width="34" height="32" viewBox="0 0 34 32"><defs><linearGradient id="mlg1" x1="0" y1="0" x2="0" y2="1"><stop offset="0" stop-color="#b8e6ea"/><stop offset="1" stop-color="#5fbcc6"/></linearGradient>
<linearGradient id="mlg2" x1="0" y1="0" x2="0" y2="1"><stop offset="0" stop-color="#27b3bb"/><stop offset="1" stop-color="#1a8f9b"/></linearGradient>
<linearGradient id="mlg3" x1="0" y1="0" x2="0" y2="1"><stop offset="0" stop-color="#3cc4c8"/><stop offset="1" stop-color="#18a0a8"/></linearGradient></defs>
<path d="M0.500 2 L1.500 1 H11 L17 14 L22 2.500 L25 1 H32.500 L33.500 2 V30 L32.500 31 H25.500 L24.500 30 V19 L20.500 26 H15 L9.500 17 V30 L8.500 31 H1.500 L0.500 30Z" fill="#1b6f7c"/>
<path d="M1.500 2 H7 L8.500 30 H1.500Z" fill="url(#mlg2)"/>
<path d="M1.500 2 L10.500 2 L20.500 25 H15.500Z" fill="url(#mlg1)"/>
<path d="M25 2 H32.500 V30 H25.500Z" fill="url(#mlg3)"/>
<path d="M25 2 L32.500 2 L20.500 25 L17.500 17.500Z" fill="#22aab2"/>
<path d="M32.500 2 L27.500 30 H25.500 V16Z" fill="#5fd0d2" opacity=".55"/>
<path d="M1.500 30 L7 14 L8.500 18 L4 30Z" fill="#52c4ca" opacity=".5"/></svg>
<div class="a" style="left:49px;top:134px;width:1587px;height:808px;border:1px solid #8e8e8e;"></div><div class="a" style="left:50px;top:173px;width:1585px;height:768px;background:#5d5d5d;overflow:hidden"><svg style="left:0;top:0" width="1585" height="768" viewBox="50 173 1585 768"><path d="M524.5 812.3 L842.2 1047.4 M524.5 812.3 L842.1 645.9 M539.9 804.2 L858.0 1035.7 M535.6 820.5 L853.5 651.9 M555.1 796.3 L873.5 1024.2 M546.8 828.8 L865.0 657.9 M570.0 788.5 L888.8 1012.9 M558.1 837.2 L876.7 664.0 M584.8 780.7 L903.9 1001.7 M569.7 845.7 L888.5 670.2 M599.3 773.1 L918.7 990.8 M581.4 854.4 L900.4 676.5 M613.7 765.6 L933.2 980.0 M593.3 863.2 L912.5 682.8 M627.8 758.2 L947.6 969.4 M605.3 872.1 L924.8 689.2 M641.8 750.9 L961.6 959.0 M617.6 881.2 L937.2 695.7 M655.6 743.6 L975.5 948.7 M630.0 890.4 L949.8 702.3 M669.2 736.5 L989.2 938.6 M642.7 899.7 L962.5 709.0 M682.6 729.5 L1002.6 928.7 M655.5 909.2 L975.4 715.7 M708.9 715.7 L1028.8 909.3 M681.7 928.7 L1001.7 729.5 M721.8 708.9 L1041.6 899.8 M695.1 938.6 L1015.1 736.6 M734.5 702.3 L1054.3 890.5 M708.8 948.7 L1028.7 743.7 M747.1 695.7 L1066.7 881.3 M722.7 959.0 L1042.5 750.9 M759.5 689.2 L1079.0 872.2 M736.7 969.4 L1056.5 758.2 M771.8 682.8 L1091.0 863.3 M751.1 980.0 L1070.6 765.7 M783.9 676.4 L1102.9 854.5 M765.6 990.8 L1085.0 773.2 M795.8 670.2 L1114.6 845.8 M780.4 1001.7 L1099.5 780.8 M807.6 664.0 L1126.2 837.3 M795.5 1012.8 L1114.3 788.5 M819.3 657.9 L1137.5 828.9 M810.8 1024.2 L1129.2 796.4 M830.8 651.9 L1148.7 820.6 M826.3 1035.7 L1144.4 804.3 M842.1 645.9 L1159.8 812.4 M842.2 1047.4 L1159.8 812.4 " stroke="#404040" stroke-width="1" fill="none" shape-rendering="crispEdges"/><path d="M695.8 722.6 L1015.8 918.9 M668.5 918.9 L988.5 722.6 " stroke="#3d3d3d" stroke-width="2" fill="none" shape-rendering="crispEdges"/><defs>
<linearGradient id="gG" x1="0" x2="1" y1="0" y2="0"><stop offset="0" stop-color="#2c4838"/><stop offset=".25" stop-color="#31513e"/><stop offset=".7" stop-color="#355843"/><stop offset="1" stop-color="#2f4e3c"/></linearGradient>
<linearGradient id="gC" x1="0" x2="1" y1="0" y2="0"><stop offset="0" stop-color="#2e4d3b"/><stop offset=".45" stop-color="#365a45"/><stop offset=".8" stop-color="#3d654c"/><stop offset="1" stop-color="#345646"/></linearGradient>
<linearGradient id="gL" x1="0" x2="1" y1="0" y2="0"><stop offset="0" stop-color="#baa6c0"/><stop offset=".3" stop-color="#c6b2cb"/><stop offset=".75" stop-color="#c3aec8"/><stop offset="1" stop-color="#b4a0ba"/></linearGradient>
<linearGradient id="gB" x1="0" x2="1" y1="0" y2="0"><stop offset="0" stop-color="#335743"/><stop offset=".5" stop-color="#31523f"/><stop offset="1" stop-color="#2c4a39"/></linearGradient>
<linearGradient id="gTop" x1="0" x2="0" y1="0" y2="1"><stop offset="0" stop-color="#a2a2a2"/><stop offset="1" stop-color="#aaaaaa"/></linearGradient>
<linearGradient id="gBL" x1="0" x2="1" y1="0" y2="0"><stop offset="0" stop-color="#bdbdbd"/><stop offset="1" stop-color="#b6b6b6"/></linearGradient>
<linearGradient id="gBR" x1="0" x2="1" y1="0" y2="0"><stop offset="0" stop-color="#b2b2b2"/><stop offset="1" stop-color="#a0a0a0"/></linearGradient>
</defs>
<path d="M739 807 L743 796.5 L744.9 794.7 L842.800 749 L942 796 L945 800 L945.900 809.600 L842.800 879.700Z" fill="#9d9d9d"/><path d="M744.900 794.700 L842.800 855 L842.800 879.700 L739 807 L742.500 797Z" fill="url(#gBL)"/><path d="M942 796 L842.800 855 L842.800 879.700 L945.900 809.600 L945 799.500Z" fill="url(#gBR)"/><path d="M744.900 794.700 L842.800 749 L942 796 L842.800 855Z" fill="url(#gTop)"/><path d="M842.800 855 V879.700" stroke="#c9c9c9" stroke-width="1"/><ellipse cx="842" cy="792.800" rx="13.500" ry="7" fill="none" stroke="#b4b4b4" stroke-width=".8" opacity=".6" stroke-dasharray="5 2"/><path d="M830.500 789.500 L835 786 M853.500 789.500 L849 786" stroke="#8a8a8a" stroke-width=".8"/><rect x="839" y="785" width="1" height="1" fill="#222"/><rect x="844.800" y="785" width="1" height="1" fill="#222"/><rect x="840.300" y="763" width="4.300" height="36.500" fill="#bfbfbf"/><rect x="840.300" y="763" width="1" height="36.500" fill="#a9a9a9"/><rect x="843.600" y="763" width="1" height="36.500" fill="#aeaeae"/><rect x="808.500" y="776.500" width="4" height="4" fill="#66706a"/><rect x="872.500" y="776.500" width="4" height="4" fill="#66706a"/><path d="M833.500 570 L836 731 L848 731 L851.500 570Z" fill="#335642"/><path d="M837 731 L837 750 L835.500 751.500 L836 760 L848.800 760 L849 751.500 L847.500 750 L847.500 731Z" fill="#c4afc9"/><rect x="838" y="759.500" width="9.500" height="4.500" rx="1" fill="#7a7a7a"/><rect x="838" y="756" width="9.500" height="3.500" fill="#b5a2ba"/><path d="M820 440 L820.800 516 L822 527 L833.700 575.500 Q842.500 578.500 851.300 575.500 L863 527 L864.200 516 L866 440Z" fill="url(#gL)"/><path d="M821.5 524 Q842.500 531 863.500 524" stroke="#bba7c0" stroke-width="1" fill="none"/><path d="M801 680 L796.600 740 L794.500 765 L792.300 774.500 L797.500 773.500 L808.900 776.800 L818.600 776.200 L819.200 775 L819.900 770.800 Q835 770 836.700 750.700 L836.900 680Z" fill="url(#gB)"/><path d="M836.700 750.700 Q835 770 819.900 770.800 L819.400 773 L828 772.500 L836.600 769Z" fill="#b3aab8"/><path d="M796.500 741 Q815 753 836.700 743.500" stroke="#28443a" stroke-width=".9" fill="none"/><path d="M826.700 530.500 L822.500 543.300 L819.200 560 L815 580 L810.800 603.300 L806.700 630 L803.300 660 L801 683 A18 7.500 0 0 0 836.700 686 L835.800 643 L835.800 616.700 L834.200 576.700 L830 543Z" fill="url(#gL)" stroke="#41524a" stroke-width="1" stroke-dasharray="3 1.500"/><path d="M824.900 531.500 l1.800 -4 l1.800 4 l.8 3 h-5.200z" fill="#3a4f45"/><path d="M883 680 L888.600 745 L890 765 L892.200 774.500 L887.300 773.500 L875 776.800 L866.500 776.200 L865.900 775 L865.200 770.800 Q850 770 847.700 750.700 L847.500 680Z" fill="url(#gB)"/><path d="M847.700 750.700 Q850 770 865.200 770.800 L865.700 773 L857 772.500 L847.800 769Z" fill="#b3aab8"/><path d="M847.700 743.500 Q869 753 888.600 741" stroke="#28443a" stroke-width=".9" fill="none"/><path d="M858 530.500 L861.700 543.300 L866.700 565 L870.800 588.300 L875.800 616.700 L880 643.300 L882 660 L883.300 683 A17.900 7.500 0 0 1 847.700 686 L849.200 626.700 L849.700 610 L851.300 576.700 L855 546.700Z" fill="url(#gL)" stroke="#41524a" stroke-width="1" stroke-dasharray="3 1.500"/><path d="M856.200 531.500 l1.800 -4 l1.800 4 l.8 3 h-5.200z" fill="#3a4f45"/><path d="M820 419 L865.6 419 L865.6 440.3 A22.850000000000012 9 -1.51 0 1 820 441.5 Z" fill="url(#gG)" /><path d="M819.500 394 L819.800 419 L866 419 L866.300 394Z" fill="#33513e"/><path d="M820.5 399.500 l2.500 8 l2.500 -8 M825.5 399.500 l2.500 8 l2.500 -8 M830.5 399.500 l2.500 8 l2.500 -8 M835.5 399.500 l2.500 8 l2.500 -8 M840.5 399.500 l2.500 8 l2.500 -8 M845.5 399.500 l2.500 8 l2.500 -8 M850.5 399.500 l2.500 8 l2.500 -8 M855.5 399.500 l2.500 8 l2.500 -8 M860.5 399.500 l2.500 8 l2.500 -8 " stroke="#7d9a8a" stroke-width=".7" fill="none" opacity=".55"/><path d="M820 404.500 A23 4 0 0 0 866 404.500" stroke="#86a091" stroke-width=".8" fill="none" stroke-dasharray="2.500 2" opacity=".6"/><ellipse cx="843" cy="419" rx="23" ry="8.500" fill="#33553f" stroke="#2a4535" stroke-width=".8"/><ellipse cx="843" cy="420" rx="15" ry="5.200" fill="none" stroke="#3d634c" stroke-width="1.200"/><ellipse cx="843" cy="421" rx="8" ry="2.800" fill="none" stroke="#3d634c" stroke-width="1"/><rect x="820" y="403" width="1.200" height="1.200" fill="#101a14"/><rect x="826" y="408" width="1.200" height="1.200" fill="#101a14"/><rect x="833" y="409.5" width="1.200" height="1.200" fill="#101a14"/><rect x="845" y="409" width="1.200" height="1.200" fill="#101a14"/><rect x="852" y="408.5" width="1.200" height="1.200" fill="#101a14"/><rect x="862" y="405" width="1.200" height="1.200" fill="#101a14"/><rect x="865" y="403.5" width="1.200" height="1.200" fill="#101a14"/><rect x="836.3" y="422.3" width="1.200" height="1.200" fill="#101a14"/><rect x="848.5" y="422.3" width="1.200" height="1.200" fill="#101a14"/><rect x="826.3" y="427.5" width="1.200" height="1.200" fill="#101a14"/><rect x="858.5" y="427.3" width="1.200" height="1.200" fill="#101a14"/><rect x="820" y="421.5" width="1.200" height="1.200" fill="#101a14"/><rect x="865.5" y="421.5" width="1.200" height="1.200" fill="#101a14"/><path d="M819.5 368 L866 368 L866 390.0 A23.3 7 -2.46 0 1 819.5 392 Z" fill="url(#gG)" /><path d="M818.800 391.500 A23.500 7 0 0 0 866.800 389.500 L866.800 394.500 A23.500 7 0 0 1 818.800 395.500Z" fill="#2b4837"/><path d="M818.800 391.500 A23.500 7 0 0 0 866.800 389.500" stroke="#3a604a" stroke-width=".8" fill="none"/><rect x="825.500" y="388" width="1.800" height="5" rx=".9" fill="#3f6850" opacity=".8"/><rect x="858" y="388" width="1.800" height="5" rx=".9" fill="#3f6850" opacity=".8"/><path d="M819.5 352 L866 352 L866 368.5 A23.3 6.2 -2.46 0 1 819.5 370.5 Z" fill="#c8b3cd" /><path d="M819.3 298 L866 298 L866 355.1 A23.400000000000023 6.8 -2.45 0 1 819.3 357.1 Z" fill="url(#gG)" /><path d="M821.300 320 C820.500 311 825 306.500 829.500 307.700 C833 308.800 834.200 313 834.500 317 L830 322 L822 328Z" fill="#14211a"/><ellipse cx="830.400" cy="326" rx="7" ry="10.400" fill="#ccb8d1"/><path d="M819.300 308 L821.800 308 L821.800 338 L819.300 338Z" fill="#243a2d" opacity=".6"/><path d="M842 246.500 C837.500 251 825 277 819.500 301.500 A23.300 5.500 -3 0 0 865.800 299 C860 276 846.500 251 842 246.500Z" fill="url(#gC)"/><path d="M75.500 915 V903" stroke="#48d048" stroke-width="1.300"/><path d="M75.500 915 L81 918.700" stroke="#d03030" stroke-width="1.200"/><path d="M75.500 915 L67.500 918.700" stroke="#1818c0" stroke-width="1.200"/><text x="75.300" y="900.300" font-size="8.500" font-weight="bold" fill="#3ec83e" text-anchor="middle" font-family="DejaVu Sans,sans-serif">y</text><text x="86" y="919.500" font-size="8.500" font-weight="bold" fill="#e02828" text-anchor="middle" font-family="DejaVu Sans,sans-serif">x</text><text x="64.700" y="919" font-size="8.500" font-weight="bold" fill="#1010c8" text-anchor="middle" font-family="DejaVu Sans,sans-serif">z</text><text x="835" y="932" font-size="9.300" font-weight="bold" fill="#e6e6e6" text-anchor="middle" font-family="DejaVu Sans,sans-serif">persp</text></svg></div>
<div class="t" style="left:58px;top:137px;letter-spacing:-0.174px">View</div><div class="t" style="left:98px;top:137px;letter-spacing:-0.192px">Shading</div><div class="t" style="left:156px;top:137px;letter-spacing:0.094px">Lighting</div><div class="t" style="left:214px;top:137px;letter-spacing:-0.258px">Show</div><div class="t" style="left:258px;top:137px;letter-spacing:-0.341px">Renderer</div><div class="t" style="left:320px;top:137px;letter-spacing:-0.751px">Panels</div>
<svg style="left:52px;top:154px" width="5" height="18" viewBox="0 0 5 18"><path d="M2.5 0 V18" stroke="#5e5e5e" stroke-width="1"/><rect x="1.5" y="4" width="2" height="10" fill="#7d7d7d"/></svg>
<svg style="left:62.0px;top:155.0px" width="16" height="16" viewBox="0 0 16 16"><g transform="translate(8.0,8.0) scale(0.87) translate(-8.0,-8.0)"><circle cx="8" cy="8" r="6.8" fill="none" stroke="#e4e4e4" stroke-width="1.6"/><path d="M4 4.5 L7.5 12 L12.5 3" stroke="#e4e4e4" stroke-width="2" fill="none"/></g></svg>
<svg style="left:81.0px;top:155.0px" width="16" height="16" viewBox="0 0 16 16"><g transform="translate(8.0,8.0) scale(0.87) translate(-8.0,-8.0)"><circle cx="8" cy="8" r="5.5" fill="#3e5d70" opacity=".8"/></g></svg>
<svg style="left:99.5px;top:155.0px" width="16" height="16" viewBox="0 0 16 16"><g transform="translate(8.0,8.0) scale(0.87) translate(-8.0,-8.0)"><rect x="3" y="3" width="9" height="9" fill="#5e4a40" opacity=".9"/><path d="M9 9 l4 4" stroke="#6a5a50" stroke-width="1.5"/></g></svg>
<svg style="left:120px;top:154px" width="5" height="18" viewBox="0 0 5 18"><path d="M2.5 0 V18" stroke="#5e5e5e" stroke-width="1"/><rect x="1.5" y="4" width="2" height="10" fill="#7d7d7d"/></svg>
<svg style="left:129.0px;top:156.0px" width="17" height="14" viewBox="0 0 17 14"><g transform="translate(8.5,7.0) scale(0.87) translate(-8.5,-7.0)"><rect x="0" y="3" width="11" height="8" rx="1" fill="#cdcdcd"/><path d="M12 7 L17 2.500 V11.5Z" fill="#cdcdcd"/></g></svg>
<svg style="left:148.0px;top:155.0px" width="17" height="16" viewBox="0 0 17 16"><g transform="translate(8.5,8.0) scale(0.87) translate(-8.5,-8.0)"><g transform="translate(3,0) scale(.82)"><rect x="0" y="3" width="11" height="8" rx="1" fill="#cdcdcd"/><path d="M12 7 L17 2.500 V11.5Z" fill="#cdcdcd"/></g><rect x="0.5" y="8.500" width="8" height="6.5" fill="#4fb5c0"/><path d="M2 8.500 V6.500 a2.500 2.500 0 0 1 5 0 V8.500" stroke="#4fb5c0" stroke-width="1.300" fill="none"/><rect x="3.8" y="10.500" width="1.400" height="2.500" fill="#444"/></g></svg>
<svg style="left:167.0px;top:155.0px" width="17" height="16" viewBox="0 0 17 16"><g transform="translate(8.5,8.0) scale(0.87) translate(-8.5,-8.0)"><g transform="translate(3,0) scale(.82)"><rect x="0" y="3" width="11" height="8" rx="1" fill="#cdcdcd"/><path d="M12 7 L17 2.500 V11.5Z" fill="#cdcdcd"/></g><circle cx="5" cy="11" r="3" fill="none" stroke="#4fb5c0" stroke-width="1.800"/><circle cx="5" cy="11" r="4.300" fill="none" stroke="#4fb5c0" stroke-width="1.500" stroke-dasharray="1.500 1.870"/></g></svg>
<svg style="left:187.0px;top:155.0px" width="16" height="16" viewBox="0 0 16 16"><g transform="translate(8.0,8.0) scale(0.87) translate(-8.0,-8.0)"><path d="M3.500 1 H12.500 V14.500 L8 10.500 L3.500 14.500Z" fill="#cdcdcd"/></g></svg>
<svg style="left:206.0px;top:155.0px" width="16" height="16" viewBox="0 0 16 16"><g transform="translate(8.0,8.0) scale(0.87) translate(-8.0,-8.0)"><path d="M1 14 L6 7 L9.500 2 V11 L6 14Z" fill="#4fb5c0"/><path d="M1 15.500 L5 12.500 H15 L11 15.500Z" fill="#cdcdcd"/><path d="M9.500 2 L9.500 11.500 L14 10 Z" fill="#2c8a96"/></g></svg>
<svg style="left:225.0px;top:155.0px" width="16" height="16" viewBox="0 0 16 16"><g transform="translate(8.0,8.0) scale(0.87) translate(-8.0,-8.0)"><path d="M5 0.500 V9 M0.800 4.800 H9.200" stroke="#cdcdcd" stroke-width="1.300"/><path d="M5 0 l2 2.200 h-4z M0 4.800 l2.200 -2 v4z M10 4.800 l-2.200 -2 v4z" fill="#cdcdcd"/><circle cx="10.500" cy="9.500" r="3.300" fill="none" stroke="#4fb5c0" stroke-width="1.700"/><path d="M8 12 L4.500 15.500" stroke="#4fb5c0" stroke-width="2"/></g></svg>
<svg style="left:243.5px;top:155.0px" width="16" height="16" viewBox="0 0 16 16"><g transform="translate(8.0,8.0) scale(0.87) translate(-8.0,-8.0)"><path d="M5 9 L12.500 1.500 L15 4 L7.500 11.500Z" fill="#cdcdcd"/><path d="M2 12.500 L5 9 L7.500 11.500 L4 14.500Z" fill="#4fb5c0"/><path d="M8 14.500 c2 1.500 4.500 0 4 -2.500" stroke="#cdcdcd" stroke-width="1.200" fill="none"/></g></svg>
<svg style="left:264.5px;top:154px" width="5" height="18" viewBox="0 0 5 18"><path d="M2.5 0 V18" stroke="#5e5e5e" stroke-width="1"/><rect x="1.5" y="4" width="2" height="10" fill="#7d7d7d"/></svg>
<div class="a" style="left:273px;top:154px;width:18px;height:18px;background:#5285a6"></div><svg style="left:274.0px;top:155.0px" width="16" height="16" viewBox="0 0 16 16"><g transform="translate(8.0,8.0) scale(0.78) translate(-8.0,-8.0)"><rect x="1.500" y="1.500" width="13" height="13" fill="#2b3e4a" stroke="#eee" stroke-width="1.200"/><path d="M5.800 1.500 V14.500 M10.200 1.500 V14.500 M1.500 5.800 H14.500 M1.500 10.200 H14.500" stroke="#eee" stroke-width="1.200"/></g></svg>
<svg style="left:293.0px;top:155.0px" width="16" height="16" viewBox="0 0 16 16"><g transform="translate(8.0,8.0) scale(0.87) translate(-8.0,-8.0)"><rect x="0.6" y="1.600" width="14.800" height="12.800" fill="#3a3a3a" stroke="#cdcdcd" stroke-width="1.200"/><path d="M1 3.800 H15 M1 12.200 H15" stroke="#cdcdcd" stroke-width="1"/><path d="M2 2.700 h1.500 M5 2.700 h1.500 M8 2.700 h1.500 M11 2.700 h1.500 M2 13.300 h1.500 M5 13.300 h1.500 M8 13.300 h1.500 M11 13.300 h1.500" stroke="#cdcdcd" stroke-width="1"/></g></svg>
<svg style="left:312.0px;top:155.0px" width="16" height="16" viewBox="0 0 16 16"><g transform="translate(8.0,8.0) scale(0.87) translate(-8.0,-8.0)"><rect x="0.6" y="1.600" width="14.800" height="12.800" fill="#3a3a3a" stroke="#cdcdcd" stroke-width="1.200"/><circle cx="8" cy="8" r="3.200" fill="#4fb5c0"/></g></svg>
<svg style="left:330.0px;top:154.0px" width="18" height="18" viewBox="0 0 18 18"><g transform="translate(9.0,9.0) scale(1) translate(-9.0,-9.0)"><rect x="0" y="0" width="18" height="18" fill="#4f4f4f" stroke="#3a3a3a" stroke-width="1"/><circle cx="9" cy="9" r="3.500" fill="#444" stroke="#3f3f3f"/></g></svg>
<svg style="left:350.0px;top:155.0px" width="16" height="16" viewBox="0 0 16 16"><g transform="translate(8.0,8.0) scale(0.87) translate(-8.0,-8.0)"><rect x="0.6" y="1.600" width="14.800" height="12.800" fill="#3a3a3a" stroke="#cdcdcd" stroke-width="1.200"/><path d="M2 8 H14 M8 3 V13" stroke="#4fb5c0" stroke-width="1" stroke-dasharray="1.500 1"/></g></svg>
<svg style="left:369.0px;top:155.0px" width="16" height="16" viewBox="0 0 16 16"><g transform="translate(8.0,8.0) scale(0.87) translate(-8.0,-8.0)"><rect x="0.6" y="1.600" width="14.800" height="12.800" fill="#3a3a3a" stroke="#cdcdcd" stroke-width="1.200"/><circle cx="10.500" cy="6" r="2.300" fill="#4fb5c0"/><path d="M2.500 12.500 L6.500 6.500 L10.500 12.500Z" fill="#4fb5c0"/></g></svg>
<svg style="left:388.0px;top:155.0px" width="16" height="16" viewBox="0 0 16 16"><g transform="translate(8.0,8.0) scale(0.87) translate(-8.0,-8.0)"><rect x="0.6" y="1.600" width="14.800" height="12.800" fill="#3a3a3a" stroke="#cdcdcd" stroke-width="1.200"/><path d="M4 4 H12 V6.500 H11 V5.500 H9 V11.500 H10 V12.500 H6 V11.500 H7 V5.500 H5 V6.500 H4Z" fill="#4fb5c0"/></g></svg>
<svg style="left:408.5px;top:154px" width="5" height="18" viewBox="0 0 5 18"><path d="M2.5 0 V18" stroke="#5e5e5e" stroke-width="1"/><rect x="1.5" y="4" width="2" height="10" fill="#7d7d7d"/></svg>
<svg style="left:418.0px;top:155.0px" width="16" height="16" viewBox="0 0 16 16"><g transform="translate(8.0,8.0) scale(0.87) translate(-8.0,-8.0)"><path d="M8 1 L14.5 4 V12 L8 15.5 L1.5 12 V4Z" fill="none" stroke="#cdcdcd" stroke-width="1.1" stroke-linejoin="round"/><path d="M1.5 4 L8 7.5 L14.5 4 M8 7.5 V15.5" stroke="#cdcdcd" stroke-width="1.1" fill="none"/><path d="M8 1 V7.500" stroke="#cdcdcd" stroke-width=".6" stroke-dasharray="1 1"/></g></svg>
<div class="a" style="left:436px;top:154px;width:18px;height:18px;background:#5285a6"></div><svg style="left:437.0px;top:155.0px" width="16" height="16" viewBox="0 0 16 16"><g transform="translate(8.0,8.0) scale(0.87) translate(-8.0,-8.0)"><path d="M8 1 L14.5 4 V12 L8 15.5 L1.5 12 V4Z" fill="#4fb9c8" stroke="#dff4f7" stroke-width="1.1" stroke-linejoin="round"/><path d="M1.5 4 L8 7.5 L14.5 4 M8 7.5 V15.5" stroke="#dff4f7" stroke-width="1.1" fill="none"/></g></svg>
<svg style="left:456.0px;top:155.0px" width="16" height="16" viewBox="0 0 16 16"><g transform="translate(8.0,8.0) scale(0.87) translate(-8.0,-8.0)"><circle cx="8" cy="8" r="6.500" fill="#e0e0e0"/><path d="M8 1.500 A6.500 6.500 0 0 1 8 14.500Z" fill="#555"/><path d="M8 3 h2.500 v2.500 h-2.500z M10.500 5.500 h2.500 v2.500 h-2.500z M8 8 h2.500 v2.500 h-2.500z M10.500 10.500 h2 v2.500 h-2z" fill="#e0e0e0"/></g></svg>
<svg style="left:475.0px;top:155.0px" width="16" height="16" viewBox="0 0 16 16"><g transform="translate(8.0,8.0) scale(0.87) translate(-8.0,-8.0)"><path d="M8 1 L14.5 4 V12 L8 15.5 L1.5 12 V4Z" fill="#3b98a6" stroke="#e0e0e0" stroke-width="1.1" stroke-linejoin="round"/><path d="M1.5 4 L8 7.5 L14.5 4 M8 7.5 V15.5" stroke="#e0e0e0" stroke-width="1.1" fill="none"/><path d="M4.700 2.500 L11.200 5.700 V13.700 M11.200 2.500 L4.700 5.700 V13.700 M1.500 8 L8 11.500 L14.500 8" stroke="#e0e0e0" stroke-width=".8" fill="none"/></g></svg>
<div class="a" style="left:493px;top:154px;width:18px;height:18px;background:#5285a6"></div><svg style="left:494.0px;top:155.0px" width="16" height="16" viewBox="0 0 16 16"><g transform="translate(8.0,8.0) scale(0.87) translate(-8.0,-8.0)"><defs><clipPath id="cc"><circle cx="8" cy="8" r="6.500"/></clipPath></defs><circle cx="8" cy="8" r="6.500" fill="#222"/><g clip-path="url(#cc)"><rect x="1.4" y="1.4" width="2.200" height="2.200" fill="#eee"/><rect x="1.4" y="5.800000000000001" width="2.200" height="2.200" fill="#eee"/><rect x="1.4" y="10.200000000000001" width="2.200" height="2.200" fill="#eee"/><rect x="3.6" y="3.6" width="2.200" height="2.200" fill="#eee"/><rect x="3.6" y="8.0" width="2.200" height="2.200" fill="#eee"/><rect x="3.6" y="12.4" width="2.200" height="2.200" fill="#eee"/><rect x="5.800000000000001" y="1.4" width="2.200" height="2.200" fill="#eee"/><rect x="5.800000000000001" y="5.800000000000001" width="2.200" height="2.200" fill="#eee"/><rect x="5.800000000000001" y="10.200000000000001" width="2.200" height="2.200" fill="#eee"/><rect x="8.0" y="3.6" width="2.200" height="2.200" fill="#eee"/><rect x="8.0" y="8.0" width="2.200" height="2.200" fill="#eee"/><rect x="8.0" y="12.4" width="2.200" height="2.200" fill="#eee"/><rect x="10.200000000000001" y="1.4" width="2.200" height="2.200" fill="#eee"/><rect x="10.200000000000001" y="5.800000000000001" width="2.200" height="2.200" fill="#eee"/><rect x="10.200000000000001" y="10.200000000000001" width="2.200" height="2.200" fill="#eee"/><rect x="12.4" y="3.6" width="2.200" height="2.200" fill="#eee"/><rect x="12.4" y="8.0" width="2.200" height="2.200" fill="#eee"/><rect x="12.4" y="12.4" width="2.200" height="2.200" fill="#eee"/></g></g></svg>
<svg style="left:513.0px;top:155.0px" width="16" height="16" viewBox="0 0 16 16"><g transform="translate(8.0,8.0) scale(0.87) translate(-8.0,-8.0)"><path d="M8 3.500 a3.600 3.600 0 0 1 2 6.600 V12 H6 V10.100 A3.600 3.600 0 0 1 8 3.500Z" fill="#e8e8e8"/><rect x="6.500" y="12.700" width="3" height="1.800" fill="#e8e8e8"/><path d="M8 0 V2 M2.500 2 L3.800 3.500 M13.500 2 L12.200 3.500 M0.500 7 H2.500 M13.500 7 H15.500" stroke="#e8e8e8" stroke-width="1.200"/></g></svg>
<svg style="left:532.0px;top:155.0px" width="16" height="16" viewBox="0 0 16 16"><g transform="translate(8.0,8.0) scale(0.87) translate(-8.0,-8.0)"><circle cx="10" cy="6.500" r="5" fill="#4fb5c0"/><path d="M1 12 L6 9 L8 11.500 L3 14.500Z" fill="#cdcdcd"/></g></svg>
<svg style="left:552.5px;top:154px" width="5" height="18" viewBox="0 0 5 18"><path d="M2.5 0 V18" stroke="#5e5e5e" stroke-width="1"/><rect x="1.5" y="4" width="2" height="10" fill="#7d7d7d"/></svg>
<svg style="left:562.0px;top:155.0px" width="16" height="16" viewBox="0 0 16 16"><g transform="translate(8.0,8.0) scale(0.87) translate(-8.0,-8.0)"><circle cx="9" cy="6.500" r="5.500" fill="#bdbdbd"/><path d="M2 11 L7 13 L15 10.500 M2 13.500 L7 15.500 L15 13 M4 10 v4 M10 12 v3" stroke="#4fb5c0" stroke-width="1" fill="none"/></g></svg>
<svg style="left:581.0px;top:155.0px" width="16" height="16" viewBox="0 0 16 16"><g transform="translate(8.0,8.0) scale(0.87) translate(-8.0,-8.0)"><circle cx="6" cy="10" r="4.500" fill="#777"/><circle cx="10.500" cy="6" r="4.500" fill="#c4c4c4"/></g></svg>
<svg style="left:600.0px;top:155.0px" width="16" height="16" viewBox="0 0 16 16"><g transform="translate(8.0,8.0) scale(0.87) translate(-8.0,-8.0)"><circle cx="8" cy="8" r="5.500" fill="none" stroke="#4fb5c0" stroke-width="2.600" stroke-dasharray="12 2.500"/><path d="M8 2.500 A5.500 5.500 0 0 1 13.500 8" stroke="#e0e0e0" stroke-width="2.600" fill="none"/></g></svg>
<svg style="left:618.0px;top:154.0px" width="18" height="18" viewBox="0 0 18 18"><g transform="translate(9.0,9.0) scale(1) translate(-9.0,-9.0)"><rect x="0" y="0" width="18" height="18" fill="#4f4f4f" stroke="#3a3a3a" stroke-width="1"/><rect x="5" y="6" width="8" height="8" fill="#3d5f5f"/></g></svg>
<svg style="left:639.5px;top:154px" width="5" height="18" viewBox="0 0 5 18"><path d="M2.5 0 V18" stroke="#5e5e5e" stroke-width="1"/><rect x="1.5" y="4" width="2" height="10" fill="#7d7d7d"/></svg>
<svg style="left:649.0px;top:155.0px" width="16" height="16" viewBox="0 0 16 16"><g transform="translate(8.0,8.0) scale(0.87) translate(-8.0,-8.0)"><rect x="1" y="1.500" width="9" height="9" fill="none" stroke="#4fb5c0" stroke-width="1.200" stroke-dasharray="2 1.300"/><path d="M7 5 L7 15 L9.400 12.800 L11.200 16 L12.800 15.200 L11.200 12 L14.200 11.800Z" fill="#e0e0e0" stroke="#444" stroke-width=".6"/></g></svg>
<svg style="left:669.5px;top:154px" width="5" height="18" viewBox="0 0 5 18"><path d="M2.5 0 V18" stroke="#5e5e5e" stroke-width="1"/><rect x="1.5" y="4" width="2" height="10" fill="#7d7d7d"/></svg>
<svg style="left:678.0px;top:155.0px" width="16" height="16" viewBox="0 0 16 16"><g transform="translate(8.0,8.0) scale(0.87) translate(-8.0,-8.0)"><rect x="5.500" y="1.500" width="9" height="9" fill="#444" stroke="#e0e0e0" stroke-width="1.400"/><rect x="1.500" y="5.500" width="9" height="9" fill="#e0e0e0" stroke="#e0e0e0" stroke-width="1.400"/><rect x="4" y="8" width="4" height="4" fill="#444"/></g></svg>
<svg style="left:697.0px;top:155.0px" width="16" height="16" viewBox="0 0 16 16"><g transform="translate(8.0,8.0) scale(0.87) translate(-8.0,-8.0)"><rect x="5.500" y="1.500" width="9" height="9" fill="#444" stroke="#e0e0e0" stroke-width="1.400"/><rect x="1.500" y="5.500" width="9" height="9" fill="#e0e0e0" stroke="#e0e0e0" stroke-width="1.400"/></g></svg>
<svg style="left:717.0px;top:155.0px" width="16" height="16" viewBox="0 0 16 16"><g transform="translate(8.0,8.0) scale(0.87) translate(-8.0,-8.0)"><rect x="1.500" y="1.500" width="13" height="13" fill="#2e2e2e" stroke="#e0e0e0" stroke-width="1.400"/><path d="M4 4 L11.500 11.500" stroke="#e0e0e0" stroke-width="1.300"/><path d="M3.500 3.500 h4 l-4 4z" fill="#e0e0e0"/></g></svg>
<svg style="left:737px;top:154px" width="5" height="18" viewBox="0 0 5 18"><path d="M2.5 0 V18" stroke="#5e5e5e" stroke-width="1"/><rect x="1.5" y="4" width="2" height="10" fill="#7d7d7d"/></svg>
<svg style="left:748.0px;top:155.0px" width="16" height="16" viewBox="0 0 16 16"><g transform="translate(8.0,8.0) scale(0.87) translate(-8.0,-8.0)"><circle cx="8" cy="8" r="6" fill="#e0e0e0"/><path d="M8 8 L8 2 M8 8 L13.200 5 M8 8 L13.200 11 M8 8 L8 14 M8 8 L2.800 11 M8 8 L2.800 5" stroke="#444" stroke-width="1.300" transform="rotate(20 8 8)"/><circle cx="8" cy="8" r="2" fill="#444"/></g></svg>
<div class="fld" style="left:768px;top:154px;width:37px;height:18px"></div><div class="t" style="left:772px;top:156px;color:#e0e0e0">0.00</div><svg style="left:809.0px;top:155.0px" width="16" height="16" viewBox="0 0 16 16"><g transform="translate(8.0,8.0) scale(0.87) translate(-8.0,-8.0)"><path d="M5 3 A5.500 5.500 0 0 0 5 13 Z" fill="#e0e0e0"/><rect x="6" y="2" width="6" height="12" fill="none" stroke="#e0e0e0" stroke-width="1.500"/><rect x="7" y="6" width="2.500" height="4" fill="#e0e0e0"/></g></svg>
<div class="fld" style="left:829px;top:154px;width:37px;height:18px"></div><div class="t" style="left:833px;top:156px;color:#e0e0e0">1.00</div><div class="a" style="left:869px;top:154px;width:18px;height:18px;background:#5285a6"></div><svg style="left:870.0px;top:155.0px" width="16" height="16" viewBox="0 0 16 16"><g transform="translate(8.0,8.0) scale(0.87) translate(-8.0,-8.0)"><circle cx="8" cy="8" r="6.800" fill="#4fb5c0" stroke="#2a7d8a" stroke-width="1"/><text x="8" y="10.200" font-size="6" font-weight="bold" fill="#e8ffff" text-anchor="middle" font-family="Liberation Sans,sans-serif">ON</text></g></svg>
<div class="a" style="left:890px;top:154px;width:163px;height:18px;background:#5d5d5d;border-radius:2px"></div><div class="a" style="left:1032px;top:154px;width:1px;height:18px;background:#4c4c4c"></div><div class="t" style="left:893px;top:156px;letter-spacing:-0.916px">sRGB gamma</div><svg style="left:1038px;top:160px" width="10" height="6" viewBox="0 0 10 6"><path d="M0 0 H10 L5 5.500Z" fill="#d8d8d8"/></svg>
<div class="a" style="left:1640px;top:131px;width:4px;height:813px;background:#3a3a3a"></div><div class="a" style="left:1644px;top:133px;width:276px;height:16px;background:#373737"></div><div class="a" style="left:1644px;top:133px;width:63px;height:16px;background:#444;border-radius:2px 2px 0 0"></div><div class="t" style="left:1653px;top:135px;color:#e4e4e4;letter-spacing:0.096px">Outliner</div><div class="t" style="left:1652px;top:153px;letter-spacing:-0.437px">Display</div><div class="t" style="left:1704px;top:153px;letter-spacing:-0.258px">Show</div><div class="t" style="left:1748px;top:153px;letter-spacing:-0.247px">Help</div><svg style="left:1650px;top:177px" width="14" height="15" viewBox="0 0 14 15"><path d="M0 0 L4 1.500 L0 3Z M14 0 L10 1.500 L14 3Z M0 12 L4 13.500 L0 15Z M14 12 L10 13.500 L14 15Z" fill="#686868"/><rect x="2.500" y="2.500" width="9" height="10" fill="none" stroke="#686868" stroke-width="1.200"/><path d="M5 6 h4 M5 9 h4" stroke="#686868" stroke-width="1"/></svg>
<div class="fld" style="left:1672px;top:176px;width:243px;height:18px;border-radius:3px"></div><div class="t" style="left:1675px;top:179px;color:#9c9c9c;letter-spacing:-0.603px">Search...</div><svg style="left:1901px;top:182px" width="10" height="6" viewBox="0 0 10 6"><path d="M0 0 H10 L5 5.500Z" fill="#d8d8d8"/></svg>
<div class="a" style="left:1645px;top:196px;width:271px;height:363px;background:#3a3a3a"></div><svg style="left:1906px;top:198px" width="10" height="6" viewBox="0 0 10 6"><path d="M0 6 L5 0.500 L10 6Z" fill="#c4c4c4"/></svg>
<div class="a" style="left:1906px;top:207px;width:10px;height:326px;background:#5a5a5a;border-radius:5px"></div><svg style="left:1906px;top:536px" width="10" height="6" viewBox="0 0 10 6"><path d="M0 0 L5 5.500 L10 0Z" fill="#c4c4c4"/></svg>
<svg style="left:1681px;top:201px" width="14" height="10" viewBox="0 0 14 10"><rect x="0" y="1" width="9.500" height="7.500" rx=".8" fill="#c4c4c4"/><path d="M10.200 4.800 L14 1 V8.500Z" fill="#c4c4c4"/></svg>
<div class="t" style="left:1699px;top:199px;color:#787878;letter-spacing:-0.366px">persp</div><svg style="left:1681px;top:221px" width="14" height="10" viewBox="0 0 14 10"><rect x="0" y="1" width="9.500" height="7.500" rx=".8" fill="#c4c4c4"/><path d="M10.200 4.800 L14 1 V8.500Z" fill="#c4c4c4"/></svg>
<div class="t" style="left:1699px;top:219px;color:#787878;letter-spacing:0.237px">top</div><svg style="left:1681px;top:241px" width="14" height="10" viewBox="0 0 14 10"><rect x="0" y="1" width="9.500" height="7.500" rx=".8" fill="#c4c4c4"/><path d="M10.200 4.800 L14 1 V8.500Z" fill="#c4c4c4"/></svg>
<div class="t" style="left:1699px;top:239px;color:#787878;letter-spacing:0.377px">front</div><svg style="left:1681px;top:261px" width="14" height="10" viewBox="0 0 14 10"><rect x="0" y="1" width="9.500" height="7.500" rx=".8" fill="#c4c4c4"/><path d="M10.200 4.800 L14 1 V8.500Z" fill="#c4c4c4"/></svg>
<div class="t" style="left:1699px;top:259px;color:#787878;letter-spacing:-0.404px">side</div><svg style="left:1665px;top:281px" width="10" height="10" viewBox="0 0 10 10"><rect x="0.500" y="0.500" width="9" height="9" fill="none" stroke="#a8a8a8" stroke-width="1"/><path d="M2.500 5 h5 M5 2.500 v5" stroke="#d0d0d0" stroke-width="1"/></svg>
<svg style="left:1681px;top:277px" width="14" height="18" viewBox="0 0 14 18"><path d="M7 0 V18 M1 4.500 L13 13.500 M13 4.500 L1 13.500" stroke="#4fb5c0" stroke-width="1.900"/></svg>
<div class="t" style="left:1699px;top:279px;color:#d8d8d8;letter-spacing:-0.355px">Miniature_Orbital_Launch_Rocket_on_D</div><svg style="left:1680px;top:298px" width="16" height="16" viewBox="0 0 16 16"><circle cx="8" cy="8" r="7" fill="none" stroke="#d0d0d0" stroke-width="1.300"/><circle cx="6" cy="10" r="3" fill="#d8d8d8"/><rect x="7.500" y="4.500" width="5" height="6" fill="#4fb5c0"/></svg>
<div class="t" style="left:1699px;top:299px;color:#d8d8d8;letter-spacing:-0.084px">defaultLightSet</div><svg style="left:1680px;top:318px" width="16" height="16" viewBox="0 0 16 16"><circle cx="8" cy="8" r="7" fill="none" stroke="#d0d0d0" stroke-width="1.300"/><circle cx="6" cy="10" r="3" fill="#d8d8d8"/><rect x="7.500" y="4.500" width="5" height="6" fill="#4fb5c0"/></svg>
<div class="t" style="left:1699px;top:319px;color:#d8d8d8;letter-spacing:-0.133px">defaultObjectSet</div><svg style="left:1649px;top:548px" width="6" height="9" viewBox="0 0 6 9"><path d="M6 0 V9 L0 4.5Z" fill="#c4c4c4"/></svg>
<div class="a" style="left:1657px;top:548px;width:164px;height:9px;background:#5d5d5d;border-radius:5px"></div><svg style="left:1895px;top:548px" width="6" height="9" viewBox="0 0 6 9"><path d="M0 0 V9 L6 4.5Z" fill="#c4c4c4"/></svg>
<div class="a" style="left:1735px;top:560px;width:88px;height:2px;background-image:radial-gradient(circle,#777 0.6px,transparent 0.9px);background-size:3px 2px"></div><div class="a" style="left:1640px;top:567px;width:280px;height:3px;background:#3a3a3a"></div><svg style="left:1842px;top:574.5px" width="15" height="15" viewBox="0 0 15 15"><path d="M7.500 0 L10.500 4.500 H4.500Z" fill="#7cc45c"/><path d="M0 14 L1.500 8.500 L5.500 12.500Z" fill="#4a78d8"/><path d="M15 14 L13.500 8.500 L9.500 12.500Z" fill="#d85050"/><path d="M7.500 4 V9 L3.500 11.500 M7.500 9 L11.500 11.500" stroke="#d8d8d8" stroke-width="1.100" fill="none"/></svg>
<svg style="left:1863px;top:575px" width="15" height="15" viewBox="0 0 15 15"><circle cx="7.500" cy="7.500" r="5" fill="none" stroke="#4fb5c0" stroke-width="3.400" stroke-dasharray="22 9.400" transform="rotate(135 7.500 7.500)"/><path d="M12.300 9 A5 5 0 0 1 10.500 11.500" stroke="#8c8c8c" stroke-width="3.400" fill="none"/><circle cx="7.500" cy="7.500" r="1.300" fill="#4fb5c0"/></svg>
<svg style="left:1885px;top:575.5px" width="14" height="14" viewBox="0 0 14 14"><path d="M1.500 0 V12.500 H14" stroke="#b0b0b0" stroke-width="1" fill="none"/><path d="M3.500 10.500 L11 3" stroke="#4fb5c0" stroke-width="1.800"/><path d="M13.500 0.500 L12.500 6 L8 1.500Z" fill="#4fb5c0"/></svg>
<div class="t" style="left:1653px;top:596px;letter-spacing:-0.425px">Channels</div><div class="t" style="left:1716px;top:596px;letter-spacing:-0.247px">Edit</div><div class="t" style="left:1751px;top:596px;letter-spacing:-0.181px">Object</div><div class="t" style="left:1800px;top:596px;letter-spacing:-0.258px">Show</div><div class="a" style="left:1646px;top:614px;width:254px;height:87px;background:#2b2b2b"></div><div class="a" style="left:1730px;top:704px;width:86px;height:2px;background-image:radial-gradient(circle,#777 0.6px,transparent 0.9px);background-size:3px 2px"></div><div class="a" style="left:1646px;top:713px;width:254px;height:19px;background:#3a3a3a"></div><div class="a" style="left:1646px;top:715px;width:59px;height:17px;background:#444;border-radius:2px 2px 0 0"></div><div class="a" style="left:1707px;top:715px;width:47px;height:17px;background:#3a3a3a;border:1px solid #4a4a4a;border-bottom:none;border-radius:2px 2px 0 0"></div><div class="t" style="left:1657px;top:717px;color:#e4e4e4;letter-spacing:-0.437px">Display</div><div class="t" style="left:1718px;top:717px;color:#9a9a9a;letter-spacing:-0.361px">Anim</div><div class="t" style="left:1656px;top:735px;letter-spacing:-0.922px">Layers</div><div class="t" style="left:1702px;top:735px;letter-spacing:0.006px">Options</div><div class="t" style="left:1759px;top:735px;letter-spacing:-0.247px">Help</div><svg style="left:1803px;top:757px" width="16" height="12" viewBox="0 0 16 12"><g transform="translate(0,1)"><path d="M0 5 L6 1.500 L12 5 L6 8.500Z" fill="#c8c8c8"/></g><path d="M12 0 L15.500 4 H13.300 V8 H10.700 V4 H8.500Z" fill="#4fb5c0"/></svg>
<svg style="left:1826px;top:757px" width="16" height="12" viewBox="0 0 16 12"><g transform="translate(0,1)"><path d="M0 5 L6 1.500 L12 5 L6 8.500Z" fill="#c8c8c8"/></g><path d="M12 9 L15.500 5 H13.300 V1 H10.700 V5 H8.500Z" fill="#4fb5c0"/></svg>
<svg style="left:1853px;top:755px" width="16" height="14" viewBox="0 0 16 14"><g transform="translate(0,4)"><path d="M0 5 L6 1.500 L12 5 L6 8.500Z" fill="#c8c8c8"/></g><path d="M11.500 0 V7 M8 3.500 H15" stroke="#4fb5c0" stroke-width="2.200"/></svg>
<svg style="left:1877px;top:755px" width="16" height="14" viewBox="0 0 16 14"><g transform="translate(0,4)"><path d="M0 5 L6 1.500 L12 5 L6 8.500Z" fill="#c8c8c8"/></g><circle cx="11.500" cy="4" r="3.600" fill="#4fb5c0"/></svg>
<div class="a" style="left:1649px;top:778px;width:247px;height:159px;background:#2b2b2b"></div><div class="a" style="left:1653px;top:782px;width:15px;height:15px;border:1px solid #3e3e3e;border-radius:2px;background:#2e2e2e"></div><div class="t" style="left:1653px;top:783px;width:15px;text-align:center;color:#e0e0e0">V</div><div class="a" style="left:1672px;top:782px;width:15px;height:15px;border:1px solid #3e3e3e;border-radius:2px;background:#2e2e2e"></div><div class="t" style="left:1672px;top:783px;width:15px;text-align:center;color:#e0e0e0">P</div><div class="a" style="left:1691px;top:782px;width:15px;height:15px;border:1px solid #3e3e3e;border-radius:2px;background:#2e2e2e"></div><div class="a" style="left:1709px;top:782px;width:16px;height:15px;background:#a50f36"></div><div class="a" style="left:1728px;top:783px;width:168px;height:14px;overflow:hidden"><div class="t" style="left:0;top:0;color:#eeeeee;letter-spacing:-0.355px">Miniature_Orbital_Launch_Rocket_on_Display_Stand</div></div><div class="a" style="left:1649px;top:924px;width:247px;height:13px;background:#383838"></div><svg style="left:1652px;top:926px" width="6" height="9" viewBox="0 0 6 9"><path d="M6 0 V9 L0 4.5Z" fill="#c4c4c4"/></svg>
<div class="a" style="left:1662px;top:926px;width:154px;height:9px;background:#5d5d5d;border-radius:5px"></div><svg style="left:1886px;top:926px" width="6" height="9" viewBox="0 0 6 9"><path d="M0 0 V9 L6 4.5Z" fill="#c4c4c4"/></svg>
<div class="a" style="left:1645px;top:732px;width:256px;height:210px;border:1px solid #505050;border-top:none"></div><div class="a" style="left:1904px;top:731px;width:16px;height:213px;background:#3a3a3a"></div><div class="a" style="left:1904px;top:838px;width:16px;height:2px;background:#444"></div><div class="a" style="left:1918px;top:571px;width:2px;height:160px;background:#3a3a3a"></div><div class="t" style="left:1911px;top:650px;transform:translate(-50%,-50%) rotate(90deg);color:#e0e0e0;letter-spacing:-0.343px">Channel Box / Layer Editor</div><div class="t" style="left:1911px;top:784px;transform:translate(-50%,-50%) rotate(90deg);color:#8c8c8c;letter-spacing:-0.033px">Modeling Toolkit</div><div class="t" style="left:1911px;top:891px;transform:translate(-50%,-50%) rotate(90deg);color:#8c8c8c;letter-spacing:0.033px">Attribute Editor</div><div class="a" style="left:0;top:943px;width:1920px;height:3px;background:#3b3b3b"></div><div class="a" style="left:3px;top:951px;width:5px;height:28px;background-image:radial-gradient(circle,#6e6e6e 0.6px,transparent 0.9px);background-size:3px 3px"></div>
<div class="a" style="left:13px;top:951px;width:1612px;height:28px;background:#2b2b2b"></div><div class="a" style="left:13px;top:951px;width:9px;height:28px;background:#262626"></div><div class="a" style="left:22px;top:951px;width:11px;height:28px;background:#5c5c5c"></div><div class="t" style="left:24px;top:964px;color:#fff;font-size:11.5px">1</div><div class="a" style="left:0;top:0;width:1625px;height:1080px;overflow:hidden"><div class="a" style="left:74px;top:964px;width:2px;height:15px;background:#b6b6b6"></div><div class="t" style="left:77.2px;top:949px;color:#9c9c9c;font-size:11px">5</div><div class="a" style="left:141px;top:964px;width:2px;height:15px;background:#b6b6b6"></div><div class="t" style="left:143.6px;top:949px;color:#9c9c9c;font-size:11px">10</div><div class="a" style="left:207px;top:964px;width:2px;height:15px;background:#b6b6b6"></div><div class="t" style="left:210.1px;top:949px;color:#9c9c9c;font-size:11px">15</div><div class="a" style="left:274px;top:964px;width:2px;height:15px;background:#b6b6b6"></div><div class="t" style="left:276.5px;top:949px;color:#9c9c9c;font-size:11px">20</div><div class="a" style="left:340px;top:964px;width:2px;height:15px;background:#b6b6b6"></div><div class="t" style="left:343.0px;top:949px;color:#9c9c9c;font-size:11px">25</div><div class="a" style="left:406px;top:964px;width:2px;height:15px;background:#b6b6b6"></div><div class="t" style="left:409.4px;top:949px;color:#9c9c9c;font-size:11px">30</div><div class="a" style="left:473px;top:964px;width:2px;height:15px;background:#b6b6b6"></div><div class="t" style="left:475.8px;top:949px;color:#9c9c9c;font-size:11px">35</div><div class="a" style="left:539px;top:964px;width:2px;height:15px;background:#b6b6b6"></div><div class="t" style="left:542.3px;top:949px;color:#9c9c9c;font-size:11px">40</div><div class="a" style="left:606px;top:964px;width:2px;height:15px;background:#b6b6b6"></div><div class="t" style="left:608.7px;top:949px;color:#9c9c9c;font-size:11px">45</div><div class="a" style="left:672px;top:964px;width:2px;height:15px;background:#b6b6b6"></div><div class="t" style="left:675.2px;top:949px;color:#9c9c9c;font-size:11px">50</div><div class="a" style="left:739px;top:964px;width:2px;height:15px;background:#b6b6b6"></div><div class="t" style="left:741.6px;top:949px;color:#9c9c9c;font-size:11px">55</div><div class="a" style="left:805px;top:964px;width:2px;height:15px;background:#b6b6b6"></div><div class="t" style="left:808.0px;top:949px;color:#9c9c9c;font-size:11px">60</div><div class="a" style="left:871px;top:964px;width:2px;height:15px;background:#b6b6b6"></div><div class="t" style="left:874.5px;top:949px;color:#9c9c9c;font-size:11px">65</div><div class="a" style="left:938px;top:964px;width:2px;height:15px;background:#b6b6b6"></div><div class="t" style="left:940.9px;top:949px;color:#9c9c9c;font-size:11px">70</div><div class="a" style="left:1004px;top:964px;width:2px;height:15px;background:#b6b6b6"></div><div class="t" style="left:1007.3px;top:949px;color:#9c9c9c;font-size:11px">75</div><div class="a" style="left:1071px;top:964px;width:2px;height:15px;background:#b6b6b6"></div><div class="t" style="left:1073.8px;top:949px;color:#9c9c9c;font-size:11px">80</div><div class="a" style="left:1137px;top:964px;width:2px;height:15px;background:#b6b6b6"></div><div class="t" style="left:1140.2px;top:949px;color:#9c9c9c;font-size:11px">85</div><div class="a" style="left:1204px;top:964px;width:2px;height:15px;background:#b6b6b6"></div><div class="t" style="left:1206.7px;top:949px;color:#9c9c9c;font-size:11px">90</div><div class="a" style="left:1270px;top:964px;width:2px;height:15px;background:#b6b6b6"></div><div class="t" style="left:1273.1px;top:949px;color:#9c9c9c;font-size:11px">95</div><div class="a" style="left:1337px;top:964px;width:2px;height:15px;background:#b6b6b6"></div><div class="t" style="left:1339.5px;top:949px;color:#9c9c9c;font-size:11px">100</div><div class="a" style="left:1403px;top:964px;width:2px;height:15px;background:#b6b6b6"></div><div class="t" style="left:1406.0px;top:949px;color:#9c9c9c;font-size:11px">105</div><div class="a" style="left:1469px;top:964px;width:2px;height:15px;background:#b6b6b6"></div><div class="t" style="left:1472.4px;top:949px;color:#9c9c9c;font-size:11px">110</div><div class="a" style="left:1536px;top:964px;width:2px;height:15px;background:#b6b6b6"></div><div class="t" style="left:1538.9px;top:949px;color:#9c9c9c;font-size:11px">115</div><div class="a" style="left:1602px;top:964px;width:2px;height:15px;background:#b6b6b6"></div><div class="t" style="left:1605.3px;top:949px;color:#9c9c9c;font-size:11px">120</div></div><div class="fld" style="left:1632px;top:957px;width:88px;height:18px"></div><div class="t" style="left:1637px;top:960px;color:#e8e8e8">1</div><svg style="left:1728.5px;top:958px" width="18" height="14" viewBox="0 0 18 14"><rect x="1" y="0.500" width="2.300" height="13" fill="#cfcfcf"/><path d="M3.500 7 L9.500 2 V12Z M10 7 L16 2 V12Z" fill="#cfcfcf"/></svg>
<svg style="left:1752px;top:958px" width="18" height="14" viewBox="0 0 18 14"><rect x="3" y="0.500" width="2.300" height="13" fill="#cfcfcf"/><path d="M6 7 L14 1 V13Z" fill="#cfcfcf"/></svg>
<svg style="left:1774.5px;top:958px" width="18" height="14" viewBox="0 0 18 14"><rect x="1.5" y="-0.500" width="3" height="15" rx="1" fill="#e07840"/><rect x="2.5" y="-2.500" width="1" height="19" fill="#e07840"/><path d="M6 7 L14 1 V13Z" fill="#cfcfcf"/></svg>
<svg style="left:1797.5px;top:958px" width="18" height="14" viewBox="0 0 18 14"><path d="M3 7 L14 0 V14Z" fill="#cfcfcf"/></svg>
<svg style="left:1821px;top:958px" width="18" height="14" viewBox="0 0 18 14"><path d="M15 7 L4 0 V14Z" fill="#cfcfcf"/></svg>
<svg style="left:1844px;top:958px" width="18" height="14" viewBox="0 0 18 14"><rect x="13" y="-0.500" width="3" height="15" rx="1" fill="#e07840"/><rect x="14" y="-2.500" width="1" height="19" fill="#e07840"/><path d="M12 7 L4 1 V13Z" fill="#cfcfcf"/></svg>
<svg style="left:1867px;top:958px" width="18" height="14" viewBox="0 0 18 14"><rect x="13" y="0.500" width="2.300" height="13" fill="#cfcfcf"/><path d="M12 7 L4 1 V13Z" fill="#cfcfcf"/></svg>
<svg style="left:1890px;top:958px" width="18" height="14" viewBox="0 0 18 14"><rect x="15" y="0.500" width="2.300" height="13" fill="#cfcfcf"/><path d="M8.500 7 L2.500 2 V12Z M15 7 L9 2 V12Z" fill="#cfcfcf"/></svg>
<div class="a" style="left:0;top:982px;width:1920px;height:3px;background:#3b3b3b"></div><div class="a" style="left:3px;top:990px;width:5px;height:26px;background-image:radial-gradient(circle,#6e6e6e 0.6px,transparent 0.9px);background-size:3px 3px"></div>
<div class="fld" style="left:14px;top:990px;width:88px;height:25px;border-radius:3px"></div><div class="t" style="left:19px;top:996px;color:#e8e8e8">1</div><div class="fld" style="left:110px;top:990px;width:88px;height:25px;border-radius:3px"></div><div class="t" style="left:115px;top:996px;color:#e8e8e8">1</div><div class="a" style="left:205px;top:990px;width:1021px;height:25px;background:#3a3a3a;border-radius:2px"></div><div class="a" style="left:210px;top:992px;width:615px;height:20px;background:#5d5d5d;border-radius:3px"></div><div class="a" style="left:215px;top:995px;width:15px;height:14px;background:#a2a2a2;border-radius:3px"></div><div class="a" style="left:807px;top:995px;width:15px;height:14px;background:#a2a2a2;border-radius:3px"></div><div class="t" style="left:233px;top:996px;color:#e0e0e0">1</div><div class="t" style="left:784px;top:996px;color:#e0e0e0">120</div><div class="fld" style="left:1233px;top:990px;width:88px;height:25px;border-radius:3px"></div><div class="t" style="left:1238px;top:996px;color:#e8e8e8">120</div><div class="fld" style="left:1329px;top:990px;width:88px;height:25px;border-radius:3px"></div><div class="t" style="left:1334px;top:996px;color:#e8e8e8">200</div><svg style="left:1420px;top:992px" width="5" height="21" viewBox="0 0 5 21"><path d="M2.500 0 V21" stroke="#6e6e6e" stroke-width="1"/><rect x="1.300" y="5" width="2.400" height="11" fill="#8c8c8c"/></svg>
<svg style="left:1437.5px;top:999px" width="9" height="6" viewBox="0 0 9 6"><path d="M0.500 0.500 H8.500 L4.500 5.500Z" fill="#3a3a3a" stroke="#8a8a8a" stroke-width="1"/></svg>
<div class="a" style="left:1454px;top:991px;width:101px;height:23px;border:1px solid #555;border-radius:2px;background:#434343"></div><div class="t" style="left:1460px;top:996px;letter-spacing:-0.482px">No Character Set</div><svg style="left:1566.5px;top:999px" width="9" height="6" viewBox="0 0 9 6"><path d="M0.500 0.500 H8.500 L4.500 5.500Z" fill="#3a3a3a" stroke="#8a8a8a" stroke-width="1"/></svg>
<div class="a" style="left:1583px;top:991px;width:101px;height:23px;border:1px solid #555;border-radius:2px;background:#434343"></div><div class="t" style="left:1589px;top:996px;letter-spacing:-0.485px">No Anim Layer</div><svg style="left:1693px;top:992px" width="5" height="21" viewBox="0 0 5 21"><path d="M2.500 0 V21" stroke="#6e6e6e" stroke-width="1"/><rect x="1.300" y="5" width="2.400" height="11" fill="#8c8c8c"/></svg>
<div class="a" style="left:1709px;top:992px;width:95px;height:19px;background:#5d5d5d;border-radius:2px"></div><div class="a" style="left:1783px;top:992px;width:1px;height:19px;background:#4c4c4c"></div><div class="t" style="left:1712px;top:996px;letter-spacing:-0.384px">24 fps</div><svg style="left:1789px;top:999px" width="10" height="6" viewBox="0 0 10 6"><path d="M0 0 H10 L5 5.500Z" fill="#d8d8d8"/></svg>
<svg style="left:1817.5px;top:995.5px" width="17" height="14" viewBox="0 0 17 14"><g transform="translate(8.5,7) scale(.9) translate(-8.5,-7)"><path d="M4 10.500 H3.500 A3.500 3.500 0 0 1 3.500 3.500 H11.500 M13 3.500 H13.500 A3.500 3.500 0 0 1 13.500 10.500 H5.500" stroke="#e0e0e0" stroke-width="1.700" fill="none"/><path d="M10.500 0.500 L14 3.500 L10.500 6.500Z M6.500 7.500 L3 10.500 L6.500 13.500Z" fill="#e0e0e0"/></g></svg>
<svg style="left:1846px;top:992px" width="5" height="21" viewBox="0 0 5 21"><path d="M2.500 0 V21" stroke="#6e6e6e" stroke-width="1"/><rect x="1.300" y="5" width="2.400" height="11" fill="#8c8c8c"/></svg>
<svg style="left:1862px;top:994px" width="17" height="17" viewBox="0 0 17 17"><path d="M8.500 1.500 A7 7 0 1 1 2.500 5" stroke="#d8d8d8" stroke-width="1.400" fill="none"/><path d="M0.500 3 L5 3.200 L3 7Z" fill="#d8d8d8"/><path d="M8.500 4 V13" stroke="#e07840" stroke-width="2"/><path d="M4 8.500 H13" stroke="#d8d8d8" stroke-width="1.200"/></svg>
<svg style="left:1890px;top:992px" width="18" height="20" viewBox="0 0 18 20"><circle cx="5" cy="4.500" r="2.200" fill="none" stroke="#d0d0d0" stroke-width="1.300"/><circle cx="5" cy="4.500" r="3.600" fill="none" stroke="#d0d0d0" stroke-width="1.400" stroke-dasharray="1.400 1.430"/><circle cx="13" cy="6.500" r="1.900" fill="#e07840"/><path d="M12.500 9 L9 10.500 L7.500 13 M12.500 9 L11.500 14 L14 16 L13 19.500 M11.500 14 L8.500 16.500 L5.500 16 M12.500 10 L15.500 12 L17.500 10.500" stroke="#e07840" stroke-width="1.700" fill="none" stroke-linecap="round" stroke-linejoin="round"/></svg>
<div class="a" style="left:0;top:1019px;width:1920px;height:3px;background:#3b3b3b"></div><div class="a" style="left:3px;top:1027px;width:5px;height:23px;background-image:radial-gradient(circle,#6e6e6e 0.6px,transparent 0.9px);background-size:3px 3px"></div>
<div class="t" style="left:24.400px;top:1031px;font-size:10.5px;color:#e0e0e0;letter-spacing:-0.331px">MEL</div><div class="fld" style="left:59px;top:1027px;width:664px;height:22px;border-radius:3px"></div><div class="a" style="left:726px;top:1032px;width:2px;height:11px;background-image:radial-gradient(circle,#777 0.6px,transparent 0.9px);background-size:2px 3px"></div><div class="fld" style="left:731px;top:1027px;width:1156px;height:22px;border-radius:3px"></div><svg style="left:1893px;top:1029px" width="18" height="18" viewBox="0 0 18 18"><rect x="0" y="0" width="18" height="18" fill="#d0d0d0"/><rect x="0" y="0" width="18" height="3.500" fill="#444"/><path d="M1 1.700 h3" stroke="#d0d0d0" stroke-width="1" stroke-dasharray="1 .7"/><rect x="0" y="3.500" width="18" height="1" fill="#d0d0d0"/><text x="9" y="14" font-size="9" font-weight="bold" text-anchor="middle" fill="#333" font-family="Liberation Mono,monospace">{;}</text></svg>
<div class="a" style="left:0;top:1053px;width:1920px;height:3px;background:#3b3b3b"></div><div class="a" style="left:3px;top:1059px;width:5px;height:20px;background-image:radial-gradient(circle,#6e6e6e 0.6px,transparent 0.9px);background-size:3px 3px"></div>
<div class="t" style="left:24px;top:1061px;font-size:11px;color:#d0d0d0;letter-spacing:-0.606px">Select Tool: select an object</div></div></body></html>
